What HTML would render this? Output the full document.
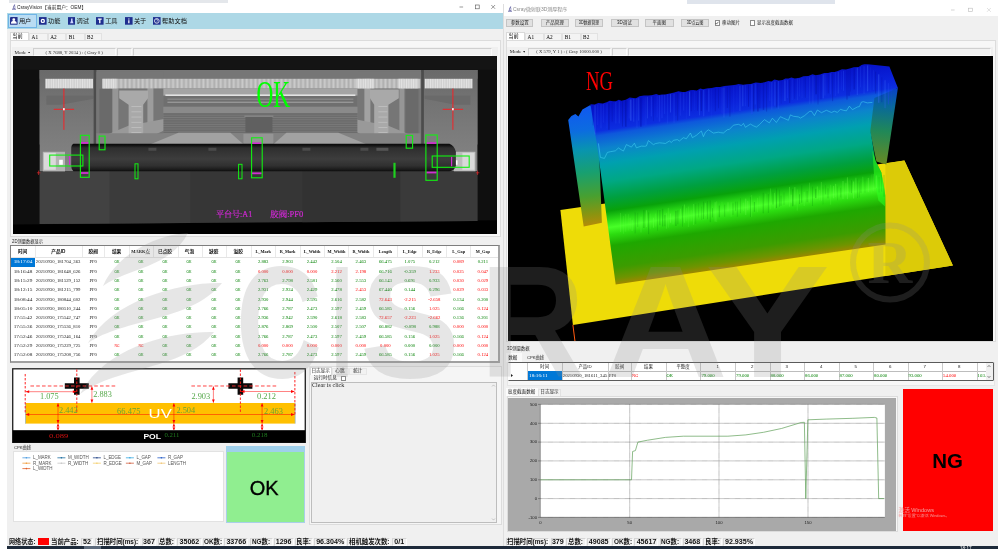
<!DOCTYPE html>
<html lang="zh-CN"><head><meta charset="utf-8"><title>CsrayVision</title>
<style>
html,body{margin:0;padding:0}
body{width:1000px;height:552px;position:relative;overflow:hidden;background:#fff;font-family:"Liberation Sans","Noto Sans CJK SC",sans-serif;}
div,span,svg{position:absolute;box-sizing:border-box}
span{white-space:nowrap}
.f{font-family:"Liberation Sans","Noto Sans CJK SC",sans-serif}
.r{font-family:"Liberation Serif","Noto Serif CJK SC",serif}
svg text{white-space:pre}
</style></head><body><div id="root" style="left:0;top:0;width:1000px;height:552px;overflow:hidden;will-change:transform">

<div style="left:9px;top:0px;width:219px;height:3.4px;background:#e4e7eb;"></div>
<div style="left:687px;top:0px;width:148px;height:3.6px;background:#dfe4ec;"></div>
<div style="left:7px;top:3px;width:496px;height:544px;background:#f0f0f0;"></div>
<div style="left:7px;top:3px;width:496px;height:10.4px;background:#ffffff;"></div>
<svg style="left:10.5px;top:4.2px" width="6" height="6" viewBox="0 0 12 12"><path d="M2 10.5h8M3.5 8.5h5M6.2 8.5c-2-2.5-1.5-5 1.3-7-1 2.500 .2 3.500 1 5" fill="none" stroke="#3b3b8c" stroke-width="1.3"/></svg>
<span class="f" style="top:4.14px;font-size:5.1px;line-height:6.12px;color:#222;left:17.3px;transform-origin:0 50%;transform:scaleX(0.93);">CsrayVision【当前用户：OEM】</span>
<svg style="left:456.500px;top:3.400px" width="46" height="8" viewBox="0 0 46 8"><path d="M2.500 4h3.600" stroke="#555" stroke-width=".6"/><rect x="18.400" y="2" width="3.800" height="3.800" fill="none" stroke="#555" stroke-width=".6"/><path d="M34.300 2l3.800 3.800M38.100 2l-3.800 3.800" stroke="#555" stroke-width=".6"/></svg>
<div style="left:7px;top:13.2px;width:496px;height:15.6px;background:#add8e6;"></div>
<div style="left:8px;top:13.6px;width:29.3px;height:14.8px;background:#b9dcf3;border:0.6px solid #6fb4e6;"></div>
<svg style="left:10px;top:17px" width="7.600" height="7.800" viewBox="0 0 8 8"><rect width="8" height="8" rx=".5" fill="#24308c"/><circle cx="4" cy="2.700" r="1.500" fill="#fff"/><path d="M1 6.400c0-1.700 1.300-2.200 3-2.200s3 .5 3 2.200z" fill="#fff"/><rect x="1" y="6.600" width="6" height=".7" fill="#dfe4f5"/></svg>
<span class="f" style="top:17.38px;font-size:6.2px;line-height:7.44px;color:#111;left:18.9px;">用户</span>
<svg style="left:39.1px;top:17px" width="7.600" height="7.800" viewBox="0 0 8 8"><rect width="8" height="8" fill="#1f2f8f"/><circle cx="4" cy="4" r="2.300" fill="#fff"/><circle cx="4" cy="4" r=".9" fill="#1f2f8f"/></svg>
<span class="f" style="top:17.38px;font-size:6.2px;line-height:7.44px;color:#111;left:48.0px;">功能</span>
<svg style="left:67.7px;top:17px" width="7.600" height="7.800" viewBox="0 0 8 8"><rect width="8" height="8" fill="#1f2f8f"/><path d="M3.200 1.500h1.600v2.300l1 2.700H2.200l1-2.700z" fill="#cfd6ff"/></svg>
<span class="f" style="top:17.38px;font-size:6.2px;line-height:7.44px;color:#111;left:76.60000000000001px;">调试</span>
<svg style="left:96.3px;top:17px" width="7.600" height="7.800" viewBox="0 0 8 8"><rect width="8" height="8" fill="#1f2f8f"/><path d="M2 1.500h4v1.200H4.700V6.500H3.300V2.700H2z" fill="#fff"/></svg>
<span class="f" style="top:17.38px;font-size:6.2px;line-height:7.44px;color:#111;left:105.2px;">工具</span>
<svg style="left:125px;top:17px" width="7.600" height="7.800" viewBox="0 0 8 8"><rect width="8" height="8" fill="#1f2f8f"/><path d="M3.400 3.200h1.300v3.300H3.400zM3.400 1.400h1.300v1.100H3.400z" fill="#fff"/></svg>
<span class="f" style="top:17.38px;font-size:6.2px;line-height:7.44px;color:#111;left:133.9px;">关于</span>
<svg style="left:153.2px;top:17px" width="7.600" height="7.800" viewBox="0 0 8 8"><rect width="8" height="8" fill="#1f2f8f"/><circle cx="4" cy="4" r="2.500" fill="none" stroke="#fff" stroke-width=".8"/><path d="M3.200 3.300c0-1.200 1.800-1.200 1.800 0 0 .7-.9.700-.9 1.500M4.100 5.500v.5" stroke="#fff" stroke-width=".6" fill="none"/></svg>
<span class="f" style="top:17.38px;font-size:6.2px;line-height:7.44px;color:#111;left:162.1px;">帮助文档</span>
<div style="left:10px;top:31.7px;width:19.2px;height:8.4px;background:#ffffff;border:0.4px solid #d9d9d9;border-bottom:none;"></div>
<span class="f" style="top:32.68px;font-size:5.2px;line-height:6.24px;left:12.2px;">当前</span>
<div style="left:29.2px;top:32.9px;width:18.7px;height:7.2px;background:#f3f3f3;border:0.4px solid #e2e2e2;border-bottom:none;"></div>
<span class="r" style="top:33.72px;font-size:5.3px;line-height:6.36px;left:31.599999999999998px;">A1</span>
<div style="left:47.9px;top:32.9px;width:18.4px;height:7.2px;background:#f3f3f3;border:0.4px solid #e2e2e2;border-bottom:none;"></div>
<span class="r" style="top:33.72px;font-size:5.3px;line-height:6.36px;left:50.3px;">A2</span>
<div style="left:66.3px;top:32.9px;width:18.4px;height:7.2px;background:#f3f3f3;border:0.4px solid #e2e2e2;border-bottom:none;"></div>
<span class="r" style="top:33.72px;font-size:5.3px;line-height:6.36px;left:68.7px;">B1</span>
<div style="left:84.7px;top:32.9px;width:17.2px;height:7.2px;background:#f3f3f3;border:0.4px solid #e2e2e2;border-bottom:none;"></div>
<span class="r" style="top:33.72px;font-size:5.3px;line-height:6.36px;left:87.10000000000001px;">B2</span>
<div style="left:9.6px;top:39.8px;width:491.5px;height:197px;background:#f7f7f7;border:0.5px solid #dcdcdc;"></div>
<div style="left:12.2px;top:47.3px;width:486px;height:9px;background:#f0f0f0;"></div>
<span class="r" style="top:49.80px;font-size:5px;line-height:6.00px;color:#222;left:14.600000000000001px;">Mode</span>
<svg style="left:27.8px;top:51.5px" width="2.4" height="1.8" viewBox="0 0 4 3"><path d="M0 0h4l-2 3z" fill="#333"/></svg>
<div style="left:32.6px;top:48.400000000000006px;width:83.19999999999999px;height:7.8px;background:#f1f1f1;border:1px solid #d0d0d0;border-right-color:#fbfbfb;border-bottom-color:#fbfbfb;"></div>
<span class="r" style="top:49.88px;font-size:4.7px;line-height:5.64px;color:#333;left:74.2px;transform:translateX(-50%);">( X 7688, Y 2034 ) : ( Gray 0 )</span>
<div style="left:117.0px;top:48.400000000000006px;width:14.600000000000014px;height:7.8px;background:#f1f1f1;border:1px solid #d0d0d0;border-right-color:#fbfbfb;border-bottom-color:#fbfbfb;"></div>
<div style="left:132.8px;top:48.400000000000006px;width:359.2px;height:7.8px;background:#f1f1f1;border:1px solid #d0d0d0;border-right-color:#fbfbfb;border-bottom-color:#fbfbfb;"></div>
<div style="left:12.6px;top:56.2px;width:484px;height:177.8px;background:#000;"></div>
<svg style="left:12.6px;top:56.2px" width="484" height="177.8" viewBox="12.6 56.2 484 177.8"><defs>
<linearGradient id="cyl" x1="0" y1="0" x2="0" y2="1"><stop offset="0" stop-color="#080808"/><stop offset=".07" stop-color="#161616"/><stop offset=".15" stop-color="#2e2e2e"/><stop offset=".55" stop-color="#3d3d3d"/><stop offset=".8" stop-color="#303030"/><stop offset=".93" stop-color="#1c1c1c"/><stop offset="1" stop-color="#0c0c0c"/></linearGradient>
<linearGradient id="pan" x1="0" y1="0" x2="0" y2="1"><stop offset="0" stop-color="#6a6a6a"/><stop offset=".35" stop-color="#747474"/><stop offset="1" stop-color="#858585"/></linearGradient>
<pattern id="st" width="2.400" height="10" patternUnits="userSpaceOnUse"><rect width="2.400" height="10" fill="#cfcfcf"/><rect width="1" height="10" fill="#e4e4e4"/></pattern>
<pattern id="st2" width="1.300" height="10" patternUnits="userSpaceOnUse"><rect width="1.300" height="10" fill="#aeaeae"/><rect width=".6" height="10" fill="#cecece"/></pattern>
<pattern id="hl" width="10" height="2.300" patternUnits="userSpaceOnUse"><rect width="10" height="2.300" fill="#6c6c6c"/><rect width="10" height=".7" fill="#7b7b7b"/></pattern>
</defs><path d="M12.600 56.200H496.600V220.400L12.600 224.600z" fill="#0f0f0f"/><path d="M12.600 56.200H496.600V70H12.600z" fill="#141414"/><path d="M39.300 171H477V221.200L39.300 224.300z" fill="#363636"/><path d="M39.300 171H109.500V223.800L39.300 224.300z" fill="#424242"/><path d="M109.500 171H190V223.200L109.500 223.800z" fill="#3b3b3b"/><path d="M302 171H400V221.700L302 222.400z" fill="#323232"/><path d="M400 171H477V221.200L400 221.700z" fill="#3a3a3a"/><rect x="39.300" y="70.200" width="437.700" height="74.500" fill="#818181"/><rect x="39.300" y="70.200" width="437.700" height="8.800" fill="#767676"/><rect x="39.300" y="70.200" width="54" height="101" fill="url(#pan)"/><rect x="423.500" y="70.200" width="53.500" height="101" fill="url(#pan)"/><path d="M46 96H93V99L60 105H46z" fill="#6a6a6a"/><path d="M424 96H470V105H455L424 99z" fill="#6a6a6a"/><rect x="44.900" y="79" width="47.800" height="9.600" fill="url(#st)"/><rect x="424.300" y="79" width="47.800" height="9.600" fill="url(#st)"/><rect x="93.200" y="70.200" width="2.800" height="74" fill="#4c4c4c"/><rect x="420.700" y="70.200" width="2.800" height="74" fill="#4c4c4c"/><rect x="96" y="72" width="67" height="72" fill="#767676"/><rect x="357" y="72" width="63.700" height="72" fill="#767676"/><rect x="99" y="89" width="13" height="46" fill="#6a6a6a"/><rect x="405" y="89" width="13" height="46" fill="#6a6a6a"/><rect x="112" y="79" width="6" height="65" fill="#969696"/><rect x="147" y="79" width="6" height="65" fill="#9c9c9c"/><rect x="364" y="79" width="6" height="65" fill="#a2a2a2"/><rect x="399" y="79" width="5" height="65" fill="#969696"/><rect x="102" y="79" width="318" height="9.600" fill="url(#st2)"/><rect x="102" y="79" width="14" height="9.600" fill="url(#st)"/><rect x="356" y="79" width="18" height="9.600" fill="url(#st)"/><rect x="398" y="79" width="20" height="9.600" fill="url(#st)"/><path d="M97 144.500V139L128 126L170 118L172 127L150 137L143 144.500z" fill="#999"/><path d="M419 144.500V139L388 126L347 118L345 127L366 137L373 144.500z" fill="#999"/><path d="M118.800 90.600H147.600V98.500L142.800 105V144H128.200V105L118.800 98.500z" fill="#a9a9a9"/><path d="M369.600 89.800H398.400V98.500L388 105V144H373.800V105L369.600 98.500z" fill="#a9a9a9"/><rect x="131" y="106.5" width="10" height=".7" fill="#c4c4c4"/><rect x="378" y="106.5" width="9" height=".7" fill="#c4c4c4"/><rect x="131" y="111.7" width="10" height=".7" fill="#c4c4c4"/><rect x="378" y="111.7" width="9" height=".7" fill="#c4c4c4"/><rect x="131" y="116.9" width="10" height=".7" fill="#c4c4c4"/><rect x="378" y="116.9" width="9" height=".7" fill="#c4c4c4"/><rect x="131" y="122.1" width="10" height=".7" fill="#c4c4c4"/><rect x="378" y="122.1" width="9" height=".7" fill="#c4c4c4"/><rect x="131" y="127.3" width="10" height=".7" fill="#c4c4c4"/><rect x="378" y="127.3" width="9" height=".7" fill="#c4c4c4"/><rect x="131" y="132.5" width="10" height=".7" fill="#c4c4c4"/><rect x="378" y="132.5" width="9" height=".7" fill="#c4c4c4"/><rect x="131" y="137.7" width="10" height=".7" fill="#c4c4c4"/><rect x="378" y="137.7" width="9" height=".7" fill="#c4c4c4"/><rect x="163" y="88.600" width="194" height="7" fill="#a4a4a4"/><rect x="165" y="94.600" width="190" height="1.600" fill="#e2e2e2"/><rect x="163" y="96.200" width="194" height="10.800" fill="#6f6f6f"/><rect x="167" y="99" width="186" height=".6" fill="#a8a8a8"/><rect x="167" y="102" width="186" height=".7" fill="#bdbdbd" /><rect x="163" y="107" width="194" height="6.200" fill="#8a8a8a"/><rect x="163" y="113.200" width="194" height="20" fill="url(#hl)"/><rect x="245" y="116.500" width="27" height="16" fill="#606060"/><rect x="244" y="115.800" width="29" height="1.200" fill="#8c8c8c"/><path d="M96 133.500H420V144.500H96z" fill="#828282"/><path d="M150 144.500L178 133H230L243 144.500z" fill="#a2a2a2"/><path d="M273 144.500L286 133H338L366 144.500z" fill="#a2a2a2"/><path d="M243 144.500V134H273V144.500z" fill="#959595"/><rect x="42.400" y="152" width="22.200" height="19.600" fill="#b4b4b4"/><rect x="43.400" y="153" width="12" height="17" fill="#dadada"/><rect x="58.800" y="160" width="3.600" height="5" fill="#fff"/><rect x="453.500" y="152" width="21.500" height="19.500" fill="#bdbdbd"/><rect x="462" y="153" width="12" height="17" fill="#d9d9d9"/><rect x="453.500" y="160.500" width="3.600" height="4.500" fill="#fff"/><path d="M73 144H449Q454 146 455.500 152V166Q454 171 449 171.500H73Q70.800 170 70.800 166V149Q70.800 145 73 144z" fill="url(#cyl)"/><rect x="148" y="148" width="8" height="3" fill="#4a4a4a"/><rect x="208" y="148" width="8" height="3" fill="#4a4a4a"/><rect x="302" y="148" width="8" height="3" fill="#4a4a4a"/><rect x="360" y="148" width="8" height="3" fill="#4a4a4a"/><rect x="376" y="148" width="12" height="3" fill="#555"/><path d="M53.3 109.500H73.7M63.5 88.800V130" stroke="#f42226" stroke-width="1" fill="none"/><rect x="62.7" y="108.300" width="1.600" height="2.200" fill="#fff"/><path d="M442.3 109.500H462.7M452.5 88.800V130" stroke="#f42226" stroke-width="1" fill="none"/><rect x="451.7" y="108.300" width="1.600" height="2.200" fill="#fff"/><path d="M36.500 173H40M38.200 170.800V175.200M475.500 173H479M477.200 170.800V175.200" stroke="#e0262a" stroke-width=".7" fill="none"/><rect x="80.600" y="142.200" width="7.600" height="1.800" fill="#d030d0"/><rect x="80.600" y="172.300" width="7.600" height="1.800" fill="#d030d0"/><rect x="251.600" y="142.600" width="9.600" height="1.600" fill="#d030d0"/><rect x="251.600" y="172.600" width="9.600" height="1.800" fill="#d030d0"/><rect x="426" y="142.400" width="10.200" height="1.700" fill="#d030d0"/><rect x="426" y="171.800" width="10.200" height="1.800" fill="#d030d0"/><rect x="68.600" y="156" width="1.200" height="9.500" fill="#d030d0"/><rect x="450.600" y="157" width="1.200" height="9.500" fill="#d030d0"/><rect x="80" y="135.5" width="8.80" height="42.00" fill="none" stroke="#12f012" stroke-width="1.1"/><rect x="98.8" y="136.3" width="5.80" height="13.70" fill="none" stroke="#12f012" stroke-width="1.1"/><rect x="49.3" y="155.3" width="33.20" height="10.90" fill="none" stroke="#12f012" stroke-width="1.1"/><rect x="134.6" y="164" width="3.00" height="15.00" fill="none" stroke="#12f012" stroke-width="1.0"/><rect x="238.2" y="164.5" width="3.40" height="14.50" fill="none" stroke="#12f012" stroke-width="1.0"/><rect x="251.2" y="138" width="10.60" height="40.00" fill="none" stroke="#12f012" stroke-width="1.1"/><rect x="393" y="163" width="2.200" height="15" fill="#1fd01f"/><rect x="405.8" y="135.6" width="6.40" height="12.80" fill="none" stroke="#12f012" stroke-width="1.1"/><rect x="425.5" y="135.2" width="11.30" height="45.30" fill="none" stroke="#12f012" stroke-width="1.1"/><rect x="431.8" y="156.2" width="37.00" height="11.30" fill="none" stroke="#12f012" stroke-width="1.1"/><text x="256" y="107.400" font-family="Liberation Serif,Noto Serif CJK SC,serif" font-size="38.600" fill="#00ff00" textLength="33.600" lengthAdjust="spacingAndGlyphs">OK</text><text x="215.500" y="217" font-family="Liberation Serif,Noto Serif CJK SC,serif" font-size="8.100" fill="#c828cc" stroke="#c828cc" stroke-width=".25" textLength="36.300" lengthAdjust="spacingAndGlyphs">平台号:A1</text><text x="269.900" y="217" font-family="Liberation Serif,Noto Serif CJK SC,serif" font-size="8.100" fill="#c828cc" stroke="#c828cc" stroke-width=".25" textLength="33" lengthAdjust="spacingAndGlyphs">胶阀:PF0</text></svg>
<span class="f" style="top:238.84px;font-size:4.6px;line-height:5.52px;color:#222;left:12px;transform-origin:0 50%;transform:scaleX(0.93);">2D测量数据显示</span>
<div style="left:10.4px;top:245px;width:489.4px;height:118.4px;background:#ffffff;border:1px solid #7e7e7e;border-right:2px solid #a4a4a4;border-bottom:2px solid #a0a0a0;"></div>
<div style="left:11.2px;top:256.9px;width:487px;height:0.4px;background:#e4e4e4;"></div>
<div style="left:34.9px;top:246px;width:0.4px;height:10.9px;background:#e9e9e9;"></div>
<div style="left:82.2px;top:246px;width:0.4px;height:10.9px;background:#e9e9e9;"></div>
<div style="left:104.4px;top:246px;width:0.4px;height:10.9px;background:#e9e9e9;"></div>
<div style="left:128.8px;top:246px;width:0.4px;height:10.9px;background:#e9e9e9;"></div>
<div style="left:153.2px;top:246px;width:0.4px;height:10.9px;background:#e9e9e9;"></div>
<div style="left:177.6px;top:246px;width:0.4px;height:10.9px;background:#e9e9e9;"></div>
<div style="left:202px;top:246px;width:0.4px;height:10.9px;background:#e9e9e9;"></div>
<div style="left:226.4px;top:246px;width:0.4px;height:10.9px;background:#e9e9e9;"></div>
<div style="left:250.8px;top:246px;width:0.4px;height:10.9px;background:#e9e9e9;"></div>
<div style="left:275.2px;top:246px;width:0.4px;height:10.9px;background:#e9e9e9;"></div>
<div style="left:299.6px;top:246px;width:0.4px;height:10.9px;background:#e9e9e9;"></div>
<div style="left:324px;top:246px;width:0.4px;height:10.9px;background:#e9e9e9;"></div>
<div style="left:348.4px;top:246px;width:0.4px;height:10.9px;background:#e9e9e9;"></div>
<div style="left:372.8px;top:246px;width:0.4px;height:10.9px;background:#e9e9e9;"></div>
<div style="left:397.2px;top:246px;width:0.4px;height:10.9px;background:#e9e9e9;"></div>
<div style="left:421.6px;top:246px;width:0.4px;height:10.9px;background:#e9e9e9;"></div>
<div style="left:446px;top:246px;width:0.4px;height:10.9px;background:#e9e9e9;"></div>
<div style="left:470.4px;top:246px;width:0.4px;height:10.9px;background:#e9e9e9;"></div>
<span class="f" style="top:248.78px;font-size:4.7px;line-height:5.64px;color:#111;font-weight:bold;left:22.6px;transform:translateX(-50%);">时间</span>
<span class="f" style="top:248.78px;font-size:4.7px;line-height:5.64px;color:#111;font-weight:bold;left:58.3px;transform:translateX(-50%);">产品ID</span>
<span class="f" style="top:248.78px;font-size:4.7px;line-height:5.64px;color:#111;font-weight:bold;left:93.2px;transform:translateX(-50%);">胶阀</span>
<span class="f" style="top:248.78px;font-size:4.7px;line-height:5.64px;color:#111;font-weight:bold;left:116.6px;transform:translateX(-50%);">结果</span>
<span class="r" style="top:248.90px;font-size:4.5px;line-height:5.40px;color:#111;font-weight:bold;left:140.6px;transform:translateX(-50%);">MARK点</span>
<span class="f" style="top:248.78px;font-size:4.7px;line-height:5.64px;color:#111;font-weight:bold;left:165px;transform:translateX(-50%);">已点胶</span>
<span class="f" style="top:248.78px;font-size:4.7px;line-height:5.64px;color:#111;font-weight:bold;left:189.4px;transform:translateX(-50%);">气泡</span>
<span class="f" style="top:248.78px;font-size:4.7px;line-height:5.64px;color:#111;font-weight:bold;left:213.8px;transform:translateX(-50%);">缺胶</span>
<span class="f" style="top:248.78px;font-size:4.7px;line-height:5.64px;color:#111;font-weight:bold;left:238.3px;transform:translateX(-50%);">溢胶</span>
<span class="r" style="top:249.02px;font-size:4.3px;line-height:5.16px;color:#111;font-weight:bold;left:263.2px;transform:translateX(-50%);">L_Mark</span>
<span class="r" style="top:249.02px;font-size:4.3px;line-height:5.16px;color:#111;font-weight:bold;left:287.6px;transform:translateX(-50%);">R_Mark</span>
<span class="r" style="top:249.02px;font-size:4.3px;line-height:5.16px;color:#111;font-weight:bold;left:312px;transform:translateX(-50%);">L_Width</span>
<span class="r" style="top:249.02px;font-size:4.3px;line-height:5.16px;color:#111;font-weight:bold;left:336.5px;transform:translateX(-50%);">M_Width</span>
<span class="r" style="top:249.02px;font-size:4.3px;line-height:5.16px;color:#111;font-weight:bold;left:360.9px;transform:translateX(-50%);">R_Width</span>
<span class="r" style="top:249.02px;font-size:4.3px;line-height:5.16px;color:#111;font-weight:bold;left:385.4px;transform:translateX(-50%);">Length</span>
<span class="r" style="top:249.02px;font-size:4.3px;line-height:5.16px;color:#111;font-weight:bold;left:409.8px;transform:translateX(-50%);">L_Edge</span>
<span class="r" style="top:249.02px;font-size:4.3px;line-height:5.16px;color:#111;font-weight:bold;left:434.3px;transform:translateX(-50%);">R_Edge</span>
<span class="r" style="top:249.02px;font-size:4.3px;line-height:5.16px;color:#111;font-weight:bold;left:458.6px;transform:translateX(-50%);">L_Gap</span>
<span class="r" style="top:249.02px;font-size:4.3px;line-height:5.16px;color:#111;font-weight:bold;left:482.9px;transform:translateX(-50%);">M_Gap</span>
<div style="left:11.2px;top:257.6px;width:23.6px;height:9.1px;background:#0078d7;"></div>
<span class="r" style="top:259.48px;font-size:4.7px;line-height:5.64px;color:#fff;left:22.6px;transform:translateX(-50%) scaleX(1.12);">18:17:04</span>
<span class="r" style="top:259.48px;font-size:4.7px;line-height:5.64px;color:#222;left:35.8px;">20210930_181704_363</span>
<span class="r" style="top:259.48px;font-size:4.7px;line-height:5.64px;color:#222;left:93.2px;transform:translateX(-50%);">PF0</span>
<span class="r" style="top:259.48px;font-size:4.7px;line-height:5.64px;color:#008000;left:116.6px;transform:translateX(-50%) scaleX(0.74);">OK</span>
<span class="r" style="top:259.48px;font-size:4.7px;line-height:5.64px;color:#008000;left:140.6px;transform:translateX(-50%) scaleX(0.74);">OK</span>
<span class="r" style="top:259.48px;font-size:4.7px;line-height:5.64px;color:#008000;left:165px;transform:translateX(-50%) scaleX(0.74);">OK</span>
<span class="r" style="top:259.48px;font-size:4.7px;line-height:5.64px;color:#008000;left:189.4px;transform:translateX(-50%) scaleX(0.74);">OK</span>
<span class="r" style="top:259.48px;font-size:4.7px;line-height:5.64px;color:#008000;left:213.8px;transform:translateX(-50%) scaleX(0.74);">OK</span>
<span class="r" style="top:259.48px;font-size:4.7px;line-height:5.64px;color:#008000;left:238.3px;transform:translateX(-50%) scaleX(0.74);">OK</span>
<span class="r" style="top:259.48px;font-size:4.7px;line-height:5.64px;color:#008000;left:263.2px;transform:translateX(-50%);">2.883</span>
<span class="r" style="top:259.48px;font-size:4.7px;line-height:5.64px;color:#008000;left:287.6px;transform:translateX(-50%);">2.903</span>
<span class="r" style="top:259.48px;font-size:4.7px;line-height:5.64px;color:#008000;left:312px;transform:translateX(-50%);">2.442</span>
<span class="r" style="top:259.48px;font-size:4.7px;line-height:5.64px;color:#008000;left:336.5px;transform:translateX(-50%);">2.504</span>
<span class="r" style="top:259.48px;font-size:4.7px;line-height:5.64px;color:#008000;left:360.9px;transform:translateX(-50%);">2.463</span>
<span class="r" style="top:259.48px;font-size:4.7px;line-height:5.64px;color:#008000;left:385.4px;transform:translateX(-50%);">66.475</span>
<span class="r" style="top:259.48px;font-size:4.7px;line-height:5.64px;color:#008000;left:409.8px;transform:translateX(-50%);">1.075</span>
<span class="r" style="top:259.48px;font-size:4.7px;line-height:5.64px;color:#008000;left:434.3px;transform:translateX(-50%);">0.212</span>
<span class="r" style="top:259.48px;font-size:4.7px;line-height:5.64px;color:#ff0000;left:458.6px;transform:translateX(-50%);">0.089</span>
<span class="r" style="top:259.48px;font-size:4.7px;line-height:5.64px;color:#008000;left:482.9px;transform:translateX(-50%);">0.211</span>
<span class="r" style="top:268.75px;font-size:4.7px;line-height:5.64px;color:#222;left:22.6px;transform:translateX(-50%) scaleX(1.12);">18:16:48</span>
<span class="r" style="top:268.75px;font-size:4.7px;line-height:5.64px;color:#222;left:35.8px;">20210930_181648_626</span>
<span class="r" style="top:268.75px;font-size:4.7px;line-height:5.64px;color:#222;left:93.2px;transform:translateX(-50%);">PF0</span>
<span class="r" style="top:268.75px;font-size:4.7px;line-height:5.64px;color:#008000;left:116.6px;transform:translateX(-50%) scaleX(0.74);">OK</span>
<span class="r" style="top:268.75px;font-size:4.7px;line-height:5.64px;color:#008000;left:140.6px;transform:translateX(-50%) scaleX(0.74);">OK</span>
<span class="r" style="top:268.75px;font-size:4.7px;line-height:5.64px;color:#008000;left:165px;transform:translateX(-50%) scaleX(0.74);">OK</span>
<span class="r" style="top:268.75px;font-size:4.7px;line-height:5.64px;color:#008000;left:189.4px;transform:translateX(-50%) scaleX(0.74);">OK</span>
<span class="r" style="top:268.75px;font-size:4.7px;line-height:5.64px;color:#008000;left:213.8px;transform:translateX(-50%) scaleX(0.74);">OK</span>
<span class="r" style="top:268.75px;font-size:4.7px;line-height:5.64px;color:#008000;left:238.3px;transform:translateX(-50%) scaleX(0.74);">OK</span>
<span class="r" style="top:268.75px;font-size:4.7px;line-height:5.64px;color:#ff0000;left:263.2px;transform:translateX(-50%);">0.000</span>
<span class="r" style="top:268.75px;font-size:4.7px;line-height:5.64px;color:#ff0000;left:287.6px;transform:translateX(-50%);">0.000</span>
<span class="r" style="top:268.75px;font-size:4.7px;line-height:5.64px;color:#ff0000;left:312px;transform:translateX(-50%);">0.000</span>
<span class="r" style="top:268.75px;font-size:4.7px;line-height:5.64px;color:#ff0000;left:336.5px;transform:translateX(-50%);">2.212</span>
<span class="r" style="top:268.75px;font-size:4.7px;line-height:5.64px;color:#ff0000;left:360.9px;transform:translateX(-50%);">2.198</span>
<span class="r" style="top:268.75px;font-size:4.7px;line-height:5.64px;color:#008000;left:385.4px;transform:translateX(-50%);">66.716</span>
<span class="r" style="top:268.75px;font-size:4.7px;line-height:5.64px;color:#008000;left:409.8px;transform:translateX(-50%);">-0.359</span>
<span class="r" style="top:268.75px;font-size:4.7px;line-height:5.64px;color:#ff0000;left:434.3px;transform:translateX(-50%);">1.233</span>
<span class="r" style="top:268.75px;font-size:4.7px;line-height:5.64px;color:#ff0000;left:458.6px;transform:translateX(-50%);">0.025</span>
<span class="r" style="top:268.75px;font-size:4.7px;line-height:5.64px;color:#ff0000;left:482.9px;transform:translateX(-50%);">0.047</span>
<span class="r" style="top:278.02px;font-size:4.7px;line-height:5.64px;color:#222;left:22.6px;transform:translateX(-50%) scaleX(1.12);">18:15:29</span>
<span class="r" style="top:278.02px;font-size:4.7px;line-height:5.64px;color:#222;left:35.8px;">20210930_181529_152</span>
<span class="r" style="top:278.02px;font-size:4.7px;line-height:5.64px;color:#222;left:93.2px;transform:translateX(-50%);">PF0</span>
<span class="r" style="top:278.02px;font-size:4.7px;line-height:5.64px;color:#008000;left:116.6px;transform:translateX(-50%) scaleX(0.74);">OK</span>
<span class="r" style="top:278.02px;font-size:4.7px;line-height:5.64px;color:#008000;left:140.6px;transform:translateX(-50%) scaleX(0.74);">OK</span>
<span class="r" style="top:278.02px;font-size:4.7px;line-height:5.64px;color:#008000;left:165px;transform:translateX(-50%) scaleX(0.74);">OK</span>
<span class="r" style="top:278.02px;font-size:4.7px;line-height:5.64px;color:#008000;left:189.4px;transform:translateX(-50%) scaleX(0.74);">OK</span>
<span class="r" style="top:278.02px;font-size:4.7px;line-height:5.64px;color:#008000;left:213.8px;transform:translateX(-50%) scaleX(0.74);">OK</span>
<span class="r" style="top:278.02px;font-size:4.7px;line-height:5.64px;color:#008000;left:238.3px;transform:translateX(-50%) scaleX(0.74);">OK</span>
<span class="r" style="top:278.02px;font-size:4.7px;line-height:5.64px;color:#008000;left:263.2px;transform:translateX(-50%);">2.763</span>
<span class="r" style="top:278.02px;font-size:4.7px;line-height:5.64px;color:#008000;left:287.6px;transform:translateX(-50%);">2.798</span>
<span class="r" style="top:278.02px;font-size:4.7px;line-height:5.64px;color:#008000;left:312px;transform:translateX(-50%);">2.581</span>
<span class="r" style="top:278.02px;font-size:4.7px;line-height:5.64px;color:#008000;left:336.5px;transform:translateX(-50%);">2.560</span>
<span class="r" style="top:278.02px;font-size:4.7px;line-height:5.64px;color:#008000;left:360.9px;transform:translateX(-50%);">2.553</span>
<span class="r" style="top:278.02px;font-size:4.7px;line-height:5.64px;color:#008000;left:385.4px;transform:translateX(-50%);">66.143</span>
<span class="r" style="top:278.02px;font-size:4.7px;line-height:5.64px;color:#008000;left:409.8px;transform:translateX(-50%);">0.691</span>
<span class="r" style="top:278.02px;font-size:4.7px;line-height:5.64px;color:#008000;left:434.3px;transform:translateX(-50%);">0.933</span>
<span class="r" style="top:278.02px;font-size:4.7px;line-height:5.64px;color:#ff0000;left:458.6px;transform:translateX(-50%);">0.030</span>
<span class="r" style="top:278.02px;font-size:4.7px;line-height:5.64px;color:#ff0000;left:482.9px;transform:translateX(-50%);">0.029</span>
<span class="r" style="top:287.29px;font-size:4.7px;line-height:5.64px;color:#222;left:22.6px;transform:translateX(-50%) scaleX(1.12);">18:12:15</span>
<span class="r" style="top:287.29px;font-size:4.7px;line-height:5.64px;color:#222;left:35.8px;">20210930_181215_799</span>
<span class="r" style="top:287.29px;font-size:4.7px;line-height:5.64px;color:#222;left:93.2px;transform:translateX(-50%);">PF0</span>
<span class="r" style="top:287.29px;font-size:4.7px;line-height:5.64px;color:#008000;left:116.6px;transform:translateX(-50%) scaleX(0.74);">OK</span>
<span class="r" style="top:287.29px;font-size:4.7px;line-height:5.64px;color:#008000;left:140.6px;transform:translateX(-50%) scaleX(0.74);">OK</span>
<span class="r" style="top:287.29px;font-size:4.7px;line-height:5.64px;color:#008000;left:165px;transform:translateX(-50%) scaleX(0.74);">OK</span>
<span class="r" style="top:287.29px;font-size:4.7px;line-height:5.64px;color:#008000;left:189.4px;transform:translateX(-50%) scaleX(0.74);">OK</span>
<span class="r" style="top:287.29px;font-size:4.7px;line-height:5.64px;color:#008000;left:213.8px;transform:translateX(-50%) scaleX(0.74);">OK</span>
<span class="r" style="top:287.29px;font-size:4.7px;line-height:5.64px;color:#008000;left:238.3px;transform:translateX(-50%) scaleX(0.74);">OK</span>
<span class="r" style="top:287.29px;font-size:4.7px;line-height:5.64px;color:#008000;left:263.2px;transform:translateX(-50%);">2.931</span>
<span class="r" style="top:287.29px;font-size:4.7px;line-height:5.64px;color:#008000;left:287.6px;transform:translateX(-50%);">2.924</span>
<span class="r" style="top:287.29px;font-size:4.7px;line-height:5.64px;color:#008000;left:312px;transform:translateX(-50%);">2.429</span>
<span class="r" style="top:287.29px;font-size:4.7px;line-height:5.64px;color:#008000;left:336.5px;transform:translateX(-50%);">2.478</span>
<span class="r" style="top:287.29px;font-size:4.7px;line-height:5.64px;color:#ff0000;left:360.9px;transform:translateX(-50%);">2.453</span>
<span class="r" style="top:287.29px;font-size:4.7px;line-height:5.64px;color:#008000;left:385.4px;transform:translateX(-50%);">67.440</span>
<span class="r" style="top:287.29px;font-size:4.7px;line-height:5.64px;color:#008000;left:409.8px;transform:translateX(-50%);">0.144</span>
<span class="r" style="top:287.29px;font-size:4.7px;line-height:5.64px;color:#008000;left:434.3px;transform:translateX(-50%);">0.296</span>
<span class="r" style="top:287.29px;font-size:4.7px;line-height:5.64px;color:#ff0000;left:458.6px;transform:translateX(-50%);">0.029</span>
<span class="r" style="top:287.29px;font-size:4.7px;line-height:5.64px;color:#ff0000;left:482.9px;transform:translateX(-50%);">0.033</span>
<span class="r" style="top:296.56px;font-size:4.7px;line-height:5.64px;color:#222;left:22.6px;transform:translateX(-50%) scaleX(1.12);">18:08:44</span>
<span class="r" style="top:296.56px;font-size:4.7px;line-height:5.64px;color:#222;left:35.8px;">20210930_180844_602</span>
<span class="r" style="top:296.56px;font-size:4.7px;line-height:5.64px;color:#222;left:93.2px;transform:translateX(-50%);">PF0</span>
<span class="r" style="top:296.56px;font-size:4.7px;line-height:5.64px;color:#008000;left:116.6px;transform:translateX(-50%) scaleX(0.74);">OK</span>
<span class="r" style="top:296.56px;font-size:4.7px;line-height:5.64px;color:#008000;left:140.6px;transform:translateX(-50%) scaleX(0.74);">OK</span>
<span class="r" style="top:296.56px;font-size:4.7px;line-height:5.64px;color:#008000;left:165px;transform:translateX(-50%) scaleX(0.74);">OK</span>
<span class="r" style="top:296.56px;font-size:4.7px;line-height:5.64px;color:#008000;left:189.4px;transform:translateX(-50%) scaleX(0.74);">OK</span>
<span class="r" style="top:296.56px;font-size:4.7px;line-height:5.64px;color:#008000;left:213.8px;transform:translateX(-50%) scaleX(0.74);">OK</span>
<span class="r" style="top:296.56px;font-size:4.7px;line-height:5.64px;color:#008000;left:238.3px;transform:translateX(-50%) scaleX(0.74);">OK</span>
<span class="r" style="top:296.56px;font-size:4.7px;line-height:5.64px;color:#008000;left:263.2px;transform:translateX(-50%);">2.930</span>
<span class="r" style="top:296.56px;font-size:4.7px;line-height:5.64px;color:#008000;left:287.6px;transform:translateX(-50%);">2.944</span>
<span class="r" style="top:296.56px;font-size:4.7px;line-height:5.64px;color:#008000;left:312px;transform:translateX(-50%);">2.595</span>
<span class="r" style="top:296.56px;font-size:4.7px;line-height:5.64px;color:#008000;left:336.5px;transform:translateX(-50%);">2.616</span>
<span class="r" style="top:296.56px;font-size:4.7px;line-height:5.64px;color:#008000;left:360.9px;transform:translateX(-50%);">2.582</span>
<span class="r" style="top:296.56px;font-size:4.7px;line-height:5.64px;color:#ff0000;left:385.4px;transform:translateX(-50%);">72.643</span>
<span class="r" style="top:296.56px;font-size:4.7px;line-height:5.64px;color:#ff0000;left:409.8px;transform:translateX(-50%);">-2.215</span>
<span class="r" style="top:296.56px;font-size:4.7px;line-height:5.64px;color:#ff0000;left:434.3px;transform:translateX(-50%);">-2.658</span>
<span class="r" style="top:296.56px;font-size:4.7px;line-height:5.64px;color:#008000;left:458.6px;transform:translateX(-50%);">0.134</span>
<span class="r" style="top:296.56px;font-size:4.7px;line-height:5.64px;color:#008000;left:482.9px;transform:translateX(-50%);">0.200</span>
<span class="r" style="top:305.83px;font-size:4.7px;line-height:5.64px;color:#222;left:22.6px;transform:translateX(-50%) scaleX(1.12);">18:05:10</span>
<span class="r" style="top:305.83px;font-size:4.7px;line-height:5.64px;color:#222;left:35.8px;">20210930_180510_244</span>
<span class="r" style="top:305.83px;font-size:4.7px;line-height:5.64px;color:#222;left:93.2px;transform:translateX(-50%);">PF0</span>
<span class="r" style="top:305.83px;font-size:4.7px;line-height:5.64px;color:#008000;left:116.6px;transform:translateX(-50%) scaleX(0.74);">OK</span>
<span class="r" style="top:305.83px;font-size:4.7px;line-height:5.64px;color:#008000;left:140.6px;transform:translateX(-50%) scaleX(0.74);">OK</span>
<span class="r" style="top:305.83px;font-size:4.7px;line-height:5.64px;color:#008000;left:165px;transform:translateX(-50%) scaleX(0.74);">OK</span>
<span class="r" style="top:305.83px;font-size:4.7px;line-height:5.64px;color:#008000;left:189.4px;transform:translateX(-50%) scaleX(0.74);">OK</span>
<span class="r" style="top:305.83px;font-size:4.7px;line-height:5.64px;color:#008000;left:213.8px;transform:translateX(-50%) scaleX(0.74);">OK</span>
<span class="r" style="top:305.83px;font-size:4.7px;line-height:5.64px;color:#008000;left:238.3px;transform:translateX(-50%) scaleX(0.74);">OK</span>
<span class="r" style="top:305.83px;font-size:4.7px;line-height:5.64px;color:#008000;left:263.2px;transform:translateX(-50%);">2.766</span>
<span class="r" style="top:305.83px;font-size:4.7px;line-height:5.64px;color:#008000;left:287.6px;transform:translateX(-50%);">2.787</span>
<span class="r" style="top:305.83px;font-size:4.7px;line-height:5.64px;color:#008000;left:312px;transform:translateX(-50%);">2.473</span>
<span class="r" style="top:305.83px;font-size:4.7px;line-height:5.64px;color:#008000;left:336.5px;transform:translateX(-50%);">2.597</span>
<span class="r" style="top:305.83px;font-size:4.7px;line-height:5.64px;color:#008000;left:360.9px;transform:translateX(-50%);">2.459</span>
<span class="r" style="top:305.83px;font-size:4.7px;line-height:5.64px;color:#008000;left:385.4px;transform:translateX(-50%);">66.585</span>
<span class="r" style="top:305.83px;font-size:4.7px;line-height:5.64px;color:#008000;left:409.8px;transform:translateX(-50%);">0.156</span>
<span class="r" style="top:305.83px;font-size:4.7px;line-height:5.64px;color:#ff0000;left:434.3px;transform:translateX(-50%);">1.025</span>
<span class="r" style="top:305.83px;font-size:4.7px;line-height:5.64px;color:#008000;left:458.6px;transform:translateX(-50%);">0.166</span>
<span class="r" style="top:305.83px;font-size:4.7px;line-height:5.64px;color:#ff0000;left:482.9px;transform:translateX(-50%);">0.124</span>
<span class="r" style="top:315.10px;font-size:4.7px;line-height:5.64px;color:#222;left:22.6px;transform:translateX(-50%) scaleX(1.12);">17:55:42</span>
<span class="r" style="top:315.10px;font-size:4.7px;line-height:5.64px;color:#222;left:35.8px;">20210930_175542_747</span>
<span class="r" style="top:315.10px;font-size:4.7px;line-height:5.64px;color:#222;left:93.2px;transform:translateX(-50%);">PF0</span>
<span class="r" style="top:315.10px;font-size:4.7px;line-height:5.64px;color:#008000;left:116.6px;transform:translateX(-50%) scaleX(0.74);">OK</span>
<span class="r" style="top:315.10px;font-size:4.7px;line-height:5.64px;color:#008000;left:140.6px;transform:translateX(-50%) scaleX(0.74);">OK</span>
<span class="r" style="top:315.10px;font-size:4.7px;line-height:5.64px;color:#008000;left:165px;transform:translateX(-50%) scaleX(0.74);">OK</span>
<span class="r" style="top:315.10px;font-size:4.7px;line-height:5.64px;color:#008000;left:189.4px;transform:translateX(-50%) scaleX(0.74);">OK</span>
<span class="r" style="top:315.10px;font-size:4.7px;line-height:5.64px;color:#008000;left:213.8px;transform:translateX(-50%) scaleX(0.74);">OK</span>
<span class="r" style="top:315.10px;font-size:4.7px;line-height:5.64px;color:#008000;left:238.3px;transform:translateX(-50%) scaleX(0.74);">OK</span>
<span class="r" style="top:315.10px;font-size:4.7px;line-height:5.64px;color:#008000;left:263.2px;transform:translateX(-50%);">2.936</span>
<span class="r" style="top:315.10px;font-size:4.7px;line-height:5.64px;color:#008000;left:287.6px;transform:translateX(-50%);">2.942</span>
<span class="r" style="top:315.10px;font-size:4.7px;line-height:5.64px;color:#008000;left:312px;transform:translateX(-50%);">2.590</span>
<span class="r" style="top:315.10px;font-size:4.7px;line-height:5.64px;color:#008000;left:336.5px;transform:translateX(-50%);">2.618</span>
<span class="r" style="top:315.10px;font-size:4.7px;line-height:5.64px;color:#008000;left:360.9px;transform:translateX(-50%);">2.583</span>
<span class="r" style="top:315.10px;font-size:4.7px;line-height:5.64px;color:#ff0000;left:385.4px;transform:translateX(-50%);">72.657</span>
<span class="r" style="top:315.10px;font-size:4.7px;line-height:5.64px;color:#ff0000;left:409.8px;transform:translateX(-50%);">-2.223</span>
<span class="r" style="top:315.10px;font-size:4.7px;line-height:5.64px;color:#ff0000;left:434.3px;transform:translateX(-50%);">-2.662</span>
<span class="r" style="top:315.10px;font-size:4.7px;line-height:5.64px;color:#008000;left:458.6px;transform:translateX(-50%);">0.136</span>
<span class="r" style="top:315.10px;font-size:4.7px;line-height:5.64px;color:#008000;left:482.9px;transform:translateX(-50%);">0.201</span>
<span class="r" style="top:324.37px;font-size:4.7px;line-height:5.64px;color:#222;left:22.6px;transform:translateX(-50%) scaleX(1.12);">17:55:36</span>
<span class="r" style="top:324.37px;font-size:4.7px;line-height:5.64px;color:#222;left:35.8px;">20210930_175536_810</span>
<span class="r" style="top:324.37px;font-size:4.7px;line-height:5.64px;color:#222;left:93.2px;transform:translateX(-50%);">PF0</span>
<span class="r" style="top:324.37px;font-size:4.7px;line-height:5.64px;color:#008000;left:116.6px;transform:translateX(-50%) scaleX(0.74);">OK</span>
<span class="r" style="top:324.37px;font-size:4.7px;line-height:5.64px;color:#008000;left:140.6px;transform:translateX(-50%) scaleX(0.74);">OK</span>
<span class="r" style="top:324.37px;font-size:4.7px;line-height:5.64px;color:#008000;left:165px;transform:translateX(-50%) scaleX(0.74);">OK</span>
<span class="r" style="top:324.37px;font-size:4.7px;line-height:5.64px;color:#008000;left:189.4px;transform:translateX(-50%) scaleX(0.74);">OK</span>
<span class="r" style="top:324.37px;font-size:4.7px;line-height:5.64px;color:#008000;left:213.8px;transform:translateX(-50%) scaleX(0.74);">OK</span>
<span class="r" style="top:324.37px;font-size:4.7px;line-height:5.64px;color:#008000;left:238.3px;transform:translateX(-50%) scaleX(0.74);">OK</span>
<span class="r" style="top:324.37px;font-size:4.7px;line-height:5.64px;color:#008000;left:263.2px;transform:translateX(-50%);">2.876</span>
<span class="r" style="top:324.37px;font-size:4.7px;line-height:5.64px;color:#008000;left:287.6px;transform:translateX(-50%);">2.869</span>
<span class="r" style="top:324.37px;font-size:4.7px;line-height:5.64px;color:#008000;left:312px;transform:translateX(-50%);">2.500</span>
<span class="r" style="top:324.37px;font-size:4.7px;line-height:5.64px;color:#008000;left:336.5px;transform:translateX(-50%);">2.507</span>
<span class="r" style="top:324.37px;font-size:4.7px;line-height:5.64px;color:#008000;left:360.9px;transform:translateX(-50%);">2.507</span>
<span class="r" style="top:324.37px;font-size:4.7px;line-height:5.64px;color:#008000;left:385.4px;transform:translateX(-50%);">66.882</span>
<span class="r" style="top:324.37px;font-size:4.7px;line-height:5.64px;color:#008000;left:409.8px;transform:translateX(-50%);">-0.098</span>
<span class="r" style="top:324.37px;font-size:4.7px;line-height:5.64px;color:#008000;left:434.3px;transform:translateX(-50%);">0.988</span>
<span class="r" style="top:324.37px;font-size:4.7px;line-height:5.64px;color:#ff0000;left:458.6px;transform:translateX(-50%);">0.000</span>
<span class="r" style="top:324.37px;font-size:4.7px;line-height:5.64px;color:#ff0000;left:482.9px;transform:translateX(-50%);">0.000</span>
<span class="r" style="top:333.64px;font-size:4.7px;line-height:5.64px;color:#222;left:22.6px;transform:translateX(-50%) scaleX(1.12);">17:52:46</span>
<span class="r" style="top:333.64px;font-size:4.7px;line-height:5.64px;color:#222;left:35.8px;">20210930_175246_164</span>
<span class="r" style="top:333.64px;font-size:4.7px;line-height:5.64px;color:#222;left:93.2px;transform:translateX(-50%);">PF0</span>
<span class="r" style="top:333.64px;font-size:4.7px;line-height:5.64px;color:#008000;left:116.6px;transform:translateX(-50%) scaleX(0.74);">OK</span>
<span class="r" style="top:333.64px;font-size:4.7px;line-height:5.64px;color:#008000;left:140.6px;transform:translateX(-50%) scaleX(0.74);">OK</span>
<span class="r" style="top:333.64px;font-size:4.7px;line-height:5.64px;color:#008000;left:165px;transform:translateX(-50%) scaleX(0.74);">OK</span>
<span class="r" style="top:333.64px;font-size:4.7px;line-height:5.64px;color:#008000;left:189.4px;transform:translateX(-50%) scaleX(0.74);">OK</span>
<span class="r" style="top:333.64px;font-size:4.7px;line-height:5.64px;color:#008000;left:213.8px;transform:translateX(-50%) scaleX(0.74);">OK</span>
<span class="r" style="top:333.64px;font-size:4.7px;line-height:5.64px;color:#008000;left:238.3px;transform:translateX(-50%) scaleX(0.74);">OK</span>
<span class="r" style="top:333.64px;font-size:4.7px;line-height:5.64px;color:#008000;left:263.2px;transform:translateX(-50%);">2.766</span>
<span class="r" style="top:333.64px;font-size:4.7px;line-height:5.64px;color:#008000;left:287.6px;transform:translateX(-50%);">2.787</span>
<span class="r" style="top:333.64px;font-size:4.7px;line-height:5.64px;color:#008000;left:312px;transform:translateX(-50%);">2.473</span>
<span class="r" style="top:333.64px;font-size:4.7px;line-height:5.64px;color:#008000;left:336.5px;transform:translateX(-50%);">2.597</span>
<span class="r" style="top:333.64px;font-size:4.7px;line-height:5.64px;color:#008000;left:360.9px;transform:translateX(-50%);">2.459</span>
<span class="r" style="top:333.64px;font-size:4.7px;line-height:5.64px;color:#008000;left:385.4px;transform:translateX(-50%);">66.585</span>
<span class="r" style="top:333.64px;font-size:4.7px;line-height:5.64px;color:#008000;left:409.8px;transform:translateX(-50%);">0.156</span>
<span class="r" style="top:333.64px;font-size:4.7px;line-height:5.64px;color:#ff0000;left:434.3px;transform:translateX(-50%);">1.025</span>
<span class="r" style="top:333.64px;font-size:4.7px;line-height:5.64px;color:#008000;left:458.6px;transform:translateX(-50%);">0.166</span>
<span class="r" style="top:333.64px;font-size:4.7px;line-height:5.64px;color:#ff0000;left:482.9px;transform:translateX(-50%);">0.124</span>
<span class="r" style="top:342.91px;font-size:4.7px;line-height:5.64px;color:#222;left:22.6px;transform:translateX(-50%) scaleX(1.12);">17:52:29</span>
<span class="r" style="top:342.91px;font-size:4.7px;line-height:5.64px;color:#222;left:35.8px;">20210930_175229_725</span>
<span class="r" style="top:342.91px;font-size:4.7px;line-height:5.64px;color:#222;left:93.2px;transform:translateX(-50%);">PF0</span>
<span class="r" style="top:342.91px;font-size:4.7px;line-height:5.64px;color:#ff0000;left:116.6px;transform:translateX(-50%) scaleX(0.74);">NG</span>
<span class="r" style="top:342.91px;font-size:4.7px;line-height:5.64px;color:#ff0000;left:140.6px;transform:translateX(-50%) scaleX(0.74);">NG</span>
<span class="r" style="top:342.91px;font-size:4.7px;line-height:5.64px;color:#008000;left:165px;transform:translateX(-50%) scaleX(0.74);">OK</span>
<span class="r" style="top:342.91px;font-size:4.7px;line-height:5.64px;color:#008000;left:189.4px;transform:translateX(-50%) scaleX(0.74);">OK</span>
<span class="r" style="top:342.91px;font-size:4.7px;line-height:5.64px;color:#008000;left:213.8px;transform:translateX(-50%) scaleX(0.74);">OK</span>
<span class="r" style="top:342.91px;font-size:4.7px;line-height:5.64px;color:#008000;left:238.3px;transform:translateX(-50%) scaleX(0.74);">OK</span>
<span class="r" style="top:342.91px;font-size:4.7px;line-height:5.64px;color:#ff0000;left:263.2px;transform:translateX(-50%);">0.000</span>
<span class="r" style="top:342.91px;font-size:4.7px;line-height:5.64px;color:#ff0000;left:287.6px;transform:translateX(-50%);">0.000</span>
<span class="r" style="top:342.91px;font-size:4.7px;line-height:5.64px;color:#ff0000;left:312px;transform:translateX(-50%);">0.000</span>
<span class="r" style="top:342.91px;font-size:4.7px;line-height:5.64px;color:#ff0000;left:336.5px;transform:translateX(-50%);">0.000</span>
<span class="r" style="top:342.91px;font-size:4.7px;line-height:5.64px;color:#ff0000;left:360.9px;transform:translateX(-50%);">0.000</span>
<span class="r" style="top:342.91px;font-size:4.7px;line-height:5.64px;color:#ff0000;left:385.4px;transform:translateX(-50%);">0.000</span>
<span class="r" style="top:342.91px;font-size:4.7px;line-height:5.64px;color:#008000;left:409.8px;transform:translateX(-50%);">0.000</span>
<span class="r" style="top:342.91px;font-size:4.7px;line-height:5.64px;color:#008000;left:434.3px;transform:translateX(-50%);">0.000</span>
<span class="r" style="top:342.91px;font-size:4.7px;line-height:5.64px;color:#ff0000;left:458.6px;transform:translateX(-50%);">0.000</span>
<span class="r" style="top:342.91px;font-size:4.7px;line-height:5.64px;color:#ff0000;left:482.9px;transform:translateX(-50%);">0.000</span>
<span class="r" style="top:352.18px;font-size:4.7px;line-height:5.64px;color:#222;left:22.6px;transform:translateX(-50%) scaleX(1.12);">17:52:08</span>
<span class="r" style="top:352.18px;font-size:4.7px;line-height:5.64px;color:#222;left:35.8px;">20210930_175208_756</span>
<span class="r" style="top:352.18px;font-size:4.7px;line-height:5.64px;color:#222;left:93.2px;transform:translateX(-50%);">PF0</span>
<span class="r" style="top:352.18px;font-size:4.7px;line-height:5.64px;color:#008000;left:116.6px;transform:translateX(-50%) scaleX(0.74);">OK</span>
<span class="r" style="top:352.18px;font-size:4.7px;line-height:5.64px;color:#008000;left:140.6px;transform:translateX(-50%) scaleX(0.74);">OK</span>
<span class="r" style="top:352.18px;font-size:4.7px;line-height:5.64px;color:#008000;left:165px;transform:translateX(-50%) scaleX(0.74);">OK</span>
<span class="r" style="top:352.18px;font-size:4.7px;line-height:5.64px;color:#008000;left:189.4px;transform:translateX(-50%) scaleX(0.74);">OK</span>
<span class="r" style="top:352.18px;font-size:4.7px;line-height:5.64px;color:#008000;left:213.8px;transform:translateX(-50%) scaleX(0.74);">OK</span>
<span class="r" style="top:352.18px;font-size:4.7px;line-height:5.64px;color:#008000;left:238.3px;transform:translateX(-50%) scaleX(0.74);">OK</span>
<span class="r" style="top:352.18px;font-size:4.7px;line-height:5.64px;color:#008000;left:263.2px;transform:translateX(-50%);">2.766</span>
<span class="r" style="top:352.18px;font-size:4.7px;line-height:5.64px;color:#008000;left:287.6px;transform:translateX(-50%);">2.787</span>
<span class="r" style="top:352.18px;font-size:4.7px;line-height:5.64px;color:#008000;left:312px;transform:translateX(-50%);">2.473</span>
<span class="r" style="top:352.18px;font-size:4.7px;line-height:5.64px;color:#008000;left:336.5px;transform:translateX(-50%);">2.597</span>
<span class="r" style="top:352.18px;font-size:4.7px;line-height:5.64px;color:#008000;left:360.9px;transform:translateX(-50%);">2.459</span>
<span class="r" style="top:352.18px;font-size:4.7px;line-height:5.64px;color:#008000;left:385.4px;transform:translateX(-50%);">66.585</span>
<span class="r" style="top:352.18px;font-size:4.7px;line-height:5.64px;color:#008000;left:409.8px;transform:translateX(-50%);">0.156</span>
<span class="r" style="top:352.18px;font-size:4.7px;line-height:5.64px;color:#ff0000;left:434.3px;transform:translateX(-50%);">1.025</span>
<span class="r" style="top:352.18px;font-size:4.7px;line-height:5.64px;color:#008000;left:458.6px;transform:translateX(-50%);">0.166</span>
<span class="r" style="top:352.18px;font-size:4.7px;line-height:5.64px;color:#ff0000;left:482.9px;transform:translateX(-50%);">0.124</span>
<svg style="left:11.6px;top:368px" width="294" height="75.4" viewBox="11.6 368 294 75.4"><rect x="12.300" y="368.800" width="292.600" height="74" fill="#fff" stroke="#1c1c1c" stroke-width="1.300"/><rect x="12.300" y="430.200" width="292.600" height="12.600" fill="#000"/><rect x="24.800" y="403" width="270" height="20.600" fill="#ffc000"/><rect x="24.600" y="403" width=".7" height="20.600" fill="#8fb6d8"/><rect x="294.400" y="403" width=".7" height="20.600" fill="#8fb6d8"/><path d="M64.4 386H88.4M76.4 377.400V394.800" stroke="#0a0a0a" stroke-width="5.600" fill="none"/><path d="M228 386H252M240 377.400V394.800" stroke="#0a0a0a" stroke-width="5.600" fill="none"/><path d="M24.800 374V414M76.400 369.500V413M240 369.500V413M294.500 372V415" stroke="#ff1818" stroke-width=".95" fill="none" stroke-dasharray="2.400 1.600"/><path d="M30 386H116M191 386H276" stroke="#ff3030" stroke-width=".9" fill="none" stroke-dasharray="3.600 2.200"/><path d="M25.2 391.7H76" stroke="#ff0000" stroke-width="0.5" fill="none"/><path d="M25.2 391.7l3.600-1.400v2.800z" fill="#ff0000"/><path d="M76 391.7l-3.600-1.400v2.800z" fill="#ff0000"/><path d="M240.5 391.5H294.2" stroke="#ff0000" stroke-width="0.5" fill="none"/><path d="M240.5 391.5l3.600-1.400v2.800z" fill="#ff0000"/><path d="M294.2 391.5l-3.600-1.400v2.800z" fill="#ff0000"/><path d="M91.5 386.4V402.8" stroke="#ff0000" stroke-width="0.5" fill="none"/><path d="M91.5 386.4l-1.400 3.400h2.800z" fill="#ff0000"/><path d="M91.5 402.8l-1.400-3.400h2.800z" fill="#ff0000"/><path d="M213 386.4V402.8" stroke="#ff0000" stroke-width="0.5" fill="none"/><path d="M213 386.4l-1.400 3.400h2.800z" fill="#ff0000"/><path d="M213 402.8l-1.400-3.400h2.800z" fill="#ff0000"/><path d="M57.6 403.2V423.4" stroke="#ff0000" stroke-width="0.5" fill="none"/><path d="M57.6 403.2l-1.400 3.400h2.800z" fill="#ff0000"/><path d="M57.6 423.4l-1.400-3.400h2.800z" fill="#ff0000"/><path d="M173.5 403.2V423.4" stroke="#ff0000" stroke-width="0.5" fill="none"/><path d="M173.5 403.2l-1.400 3.400h2.800z" fill="#ff0000"/><path d="M173.5 423.4l-1.400-3.400h2.800z" fill="#ff0000"/><path d="M261.7 403.2V423.4" stroke="#ff0000" stroke-width="0.5" fill="none"/><path d="M261.7 403.2l-1.400 3.400h2.800z" fill="#ff0000"/><path d="M261.7 423.4l-1.400-3.400h2.800z" fill="#ff0000"/><path d="M25.2 414.5H294.2" stroke="#ff0000" stroke-width="0.5" fill="none"/><path d="M25.2 414.5l3.600-1.400v2.800z" fill="#ff0000"/><path d="M294.2 414.5l-3.600-1.400v2.800z" fill="#ff0000"/><path d="M57.6 423.600V430" stroke="#ff0000" stroke-width=".5"/><path d="M57.6 423.800l-1.400 2.600h2.800zM57.6 430.200l-1.400-2.600h2.800z" fill="#ff0000"/><path d="M173.5 423.600V430" stroke="#ff0000" stroke-width=".5"/><path d="M173.5 423.800l-1.400 2.600h2.800zM173.5 430.200l-1.400-2.600h2.800z" fill="#ff0000"/><path d="M261.7 423.600V430" stroke="#ff0000" stroke-width=".5"/><path d="M261.7 423.800l-1.400 2.600h2.800zM261.7 430.200l-1.400-2.600h2.800z" fill="#ff0000"/><text x="39.6" y="398.8" font-family="Liberation Serif,Noto Serif CJK SC,serif" font-size="7.2" fill="#55a84a" textLength="18.6" lengthAdjust="spacingAndGlyphs">1.075</text><text x="92.8" y="396.8" font-family="Liberation Serif,Noto Serif CJK SC,serif" font-size="7.2" fill="#55a84a" textLength="18.6" lengthAdjust="spacingAndGlyphs">2.883</text><text x="191" y="398.8" font-family="Liberation Serif,Noto Serif CJK SC,serif" font-size="7.2" fill="#55a84a" textLength="18.8" lengthAdjust="spacingAndGlyphs">2.903</text><text x="256.6" y="398.8" font-family="Liberation Serif,Noto Serif CJK SC,serif" font-size="7.2" fill="#55a84a" textLength="19" lengthAdjust="spacingAndGlyphs">0.212</text><text x="58.6" y="412.8" font-family="Liberation Serif,Noto Serif CJK SC,serif" font-size="7.2" fill="#6aa332" textLength="18.6" lengthAdjust="spacingAndGlyphs">2.442</text><text x="116.6" y="413.8" font-family="Liberation Serif,Noto Serif CJK SC,serif" font-size="7.2" fill="#6aa332" textLength="23.4" lengthAdjust="spacingAndGlyphs">66.475</text><text x="176" y="412.6" font-family="Liberation Serif,Noto Serif CJK SC,serif" font-size="7.2" fill="#6aa332" textLength="18.8" lengthAdjust="spacingAndGlyphs">2.504</text><text x="263.6" y="413.6" font-family="Liberation Serif,Noto Serif CJK SC,serif" font-size="7.2" fill="#6aa332" textLength="19" lengthAdjust="spacingAndGlyphs">2.463</text><text x="48.6" y="437.6" font-family="Liberation Serif,Noto Serif CJK SC,serif" font-size="6.6" fill="#d01010" textLength="19.4" lengthAdjust="spacingAndGlyphs">0.089</text><text x="164" y="437.4" font-family="Liberation Serif,Noto Serif CJK SC,serif" font-size="6.2" fill="#1f7a1f" textLength="15" lengthAdjust="spacingAndGlyphs">0.211</text><text x="251.4" y="437.4" font-family="Liberation Serif,Noto Serif CJK SC,serif" font-size="6.2" fill="#1f7a1f" textLength="15.6" lengthAdjust="spacingAndGlyphs">0.218</text><text x="148.2" y="418.3" font-family="Liberation Sans,Noto Sans CJK SC,sans-serif" font-size="13.4" fill="#ffffff" textLength="23.2" lengthAdjust="spacingAndGlyphs">UV</text><text x="143" y="438.8" font-family="Liberation Sans,Noto Sans CJK SC,sans-serif" font-size="6.4" fill="#ffffff" textLength="17.6" lengthAdjust="spacingAndGlyphs" font-weight="bold">POL</text></svg>
<span class="f" style="top:445.36px;font-size:4.4px;line-height:5.28px;color:#222;left:14.2px;transform-origin:0 50%;transform:scaleX(0.95);">CPK曲线</span>
<div style="left:12.6px;top:451.2px;width:211px;height:71.3px;background:#ffffff;border:0.4px solid #e2e2e2;"></div>
<svg style="left:12.6px;top:451.2px" width="211" height="71.3" viewBox="12.6 451.2 211 71.3"><path d="M22 458.0h8" stroke="#4f9de0" stroke-width=".8"/><circle cx="26" cy="458.0" r=".8" fill="#4f9de0"/><text x="32.5" y="459.6" font-family="Liberation Sans,Noto Sans CJK SC,sans-serif" font-size="4.500" fill="#555">L_MARK</text><path d="M22 463.4h8" stroke="#f0a040" stroke-width=".8"/><circle cx="26" cy="463.4" r=".8" fill="#f0a040"/><text x="32.5" y="465.0" font-family="Liberation Sans,Noto Sans CJK SC,sans-serif" font-size="4.500" fill="#555">R_MARK</text><path d="M22 468.8h8" stroke="#e0602a" stroke-width=".8"/><circle cx="26" cy="468.8" r=".8" fill="#e0602a"/><text x="32.5" y="470.40000000000003" font-family="Liberation Sans,Noto Sans CJK SC,sans-serif" font-size="4.500" fill="#555">L_WIDTH</text><path d="M57 458.0h8" stroke="#1f6f9f" stroke-width=".8"/><circle cx="61" cy="458.0" r=".8" fill="#1f6f9f"/><text x="67.5" y="459.6" font-family="Liberation Sans,Noto Sans CJK SC,sans-serif" font-size="4.500" fill="#555">M_WIDTH</text><path d="M57 463.4h8" stroke="#c8c8c8" stroke-width=".8"/><circle cx="61" cy="463.4" r=".8" fill="#c8c8c8"/><text x="67.5" y="465.0" font-family="Liberation Sans,Noto Sans CJK SC,sans-serif" font-size="4.500" fill="#555">R_WIDTH</text><path d="M92.5 458.0h8" stroke="#2a4a8a" stroke-width=".8"/><circle cx="96.5" cy="458.0" r=".8" fill="#2a4a8a"/><text x="103.0" y="459.6" font-family="Liberation Sans,Noto Sans CJK SC,sans-serif" font-size="4.500" fill="#555">L_EDGE</text><path d="M92.5 463.4h8" stroke="#f5d070" stroke-width=".8"/><circle cx="96.5" cy="463.4" r=".8" fill="#f5d070"/><text x="103.0" y="465.0" font-family="Liberation Sans,Noto Sans CJK SC,sans-serif" font-size="4.500" fill="#555">R_EDGE</text><path d="M125.5 458.0h8" stroke="#38a8e0" stroke-width=".8"/><circle cx="129.5" cy="458.0" r=".8" fill="#38a8e0"/><text x="136.0" y="459.6" font-family="Liberation Sans,Noto Sans CJK SC,sans-serif" font-size="4.500" fill="#555">L_GAP</text><path d="M125.5 463.4h8" stroke="#d06040" stroke-width=".8"/><circle cx="129.5" cy="463.4" r=".8" fill="#d06040"/><text x="136.0" y="465.0" font-family="Liberation Sans,Noto Sans CJK SC,sans-serif" font-size="4.500" fill="#555">M_GAP</text><path d="M157 458.0h8" stroke="#2a60c8" stroke-width=".8"/><circle cx="161" cy="458.0" r=".8" fill="#2a60c8"/><text x="167.5" y="459.6" font-family="Liberation Sans,Noto Sans CJK SC,sans-serif" font-size="4.500" fill="#555">R_GAP</text><path d="M157 463.4h8" stroke="#f0c878" stroke-width=".8"/><circle cx="161" cy="463.4" r=".8" fill="#f0c878"/><text x="167.5" y="465.0" font-family="Liberation Sans,Noto Sans CJK SC,sans-serif" font-size="4.500" fill="#555">LENGTH</text></svg>
<div style="left:226px;top:446px;width:78.5px;height:76.6px;background:#90ee90;border:0.5px solid #a9cfe8;"></div>
<div style="left:226px;top:446px;width:78.5px;height:5.8px;background:#9fd0ea;"></div>
<span class="f" style="top:476.10px;font-size:20px;line-height:24.00px;left:264.2px;transform:translateX(-50%);-webkit-text-stroke:0.35px #000;">OK</span>
<div style="left:308.6px;top:366.2px;width:193px;height:158.5px;background:#f5f5f5;border:0.5px solid #dcdcdc;"></div>
<div style="left:309.6px;top:366.6px;width:22.5px;height:8px;background:#ffffff;border:0.4px solid #d9d9d9;border-bottom:none;"></div>
<div style="left:332.1px;top:367.6px;width:16.5px;height:7px;background:#f2f2f2;border:1px solid #e6e6e6;"></div>
<div style="left:348.6px;top:367.6px;width:18px;height:7px;background:#f2f2f2;border:1px solid #e6e6e6;"></div>
<span class="f" style="top:367.94px;font-size:4.6px;line-height:5.52px;color:#222;left:311.4px;">日志显示</span>
<span class="f" style="top:368.44px;font-size:4.6px;line-height:5.52px;color:#222;left:335.3px;">心跳</span>
<span class="f" style="top:368.44px;font-size:4.6px;line-height:5.52px;color:#222;left:353.2px;">统计</span>
<span class="f" style="top:375.44px;font-size:4.6px;line-height:5.52px;color:#222;left:313.8px;">运行时信息</span>
<div style="left:340.5px;top:375.8px;width:5.4px;height:5.4px;background:#fff;border:1px solid #8a8a8a;"></div>
<div style="left:310.8px;top:381.8px;width:186.2px;height:141px;background:#f0f0f0;border:1px solid #bdbdbd;"></div>
<span class="r" style="top:382.16px;font-size:5.4px;line-height:6.48px;color:#222;left:312.2px;transform-origin:0 50%;transform:scaleX(1.14);">Clear is click</span>
<svg style="left:490.500px;top:383px" width="5" height="139" viewBox="0 0 5 139"><path d="M1 3.500l1.500-1.600 1.500 1.600M1 135.500l1.500 1.600 1.500-1.600" fill="none" stroke="#999" stroke-width=".5"/></svg>
<span class="f" style="top:538.44px;font-size:7.1px;line-height:8.52px;color:#111;font-weight:bold;left:9.2px;transform-origin:0 50%;transform:scaleX(0.86);">网络状态:</span>
<div style="left:38.1px;top:537.7px;width:10.6px;height:7.4px;background:#ff0000;"></div>
<span class="f" style="top:538.44px;font-size:7.1px;line-height:8.52px;color:#111;font-weight:bold;left:51px;transform-origin:0 50%;transform:scaleX(0.9);">当前产品:</span>
<div style="left:80.6px;top:538.2px;width:12.800000000000011px;height:8px;border:1px solid #d4d4d4;border-right-color:#fcfcfc;border-bottom-color:#fcfcfc;"></div>
<span class="f" style="top:538.44px;font-size:7.1px;line-height:8.52px;color:#111;font-weight:bold;left:87px;transform:translateX(-50%);">52</span>
<div style="left:94.8px;top:538.2px;width:45.7px;height:8px;border:1px solid #d4d4d4;border-right-color:#fcfcfc;border-bottom-color:#fcfcfc;"></div>
<span class="f" style="top:538.44px;font-size:7.1px;line-height:8.52px;color:#111;font-weight:bold;left:97.3px;transform-origin:0 50%;transform:scaleX(0.9);">扫描时间(ms):</span>
<div style="left:141.6px;top:538.2px;width:14.800000000000011px;height:8px;border:1px solid #d4d4d4;border-right-color:#fcfcfc;border-bottom-color:#fcfcfc;"></div>
<span class="f" style="top:538.44px;font-size:7.1px;line-height:8.52px;color:#111;font-weight:bold;left:149px;transform:translateX(-50%);">367</span>
<div style="left:157.6px;top:538.2px;width:18.400000000000006px;height:8px;border:1px solid #d4d4d4;border-right-color:#fcfcfc;border-bottom-color:#fcfcfc;"></div>
<span class="f" style="top:538.44px;font-size:7.1px;line-height:8.52px;color:#111;font-weight:bold;left:159.3px;transform-origin:0 50%;transform:scaleX(0.9);">总数:</span>
<div style="left:177.2px;top:538.2px;width:24.400000000000006px;height:8px;border:1px solid #d4d4d4;border-right-color:#fcfcfc;border-bottom-color:#fcfcfc;"></div>
<span class="f" style="top:538.44px;font-size:7.1px;line-height:8.52px;color:#111;font-weight:bold;left:189.4px;transform:translateX(-50%);">35062</span>
<div style="left:202.7px;top:538.2px;width:20.30000000000001px;height:8px;border:1px solid #d4d4d4;border-right-color:#fcfcfc;border-bottom-color:#fcfcfc;"></div>
<span class="f" style="top:538.44px;font-size:7.1px;line-height:8.52px;color:#111;font-weight:bold;left:204.3px;transform-origin:0 50%;transform:scaleX(0.9);">OK数:</span>
<div style="left:224.2px;top:538.2px;width:24.200000000000017px;height:8px;border:1px solid #d4d4d4;border-right-color:#fcfcfc;border-bottom-color:#fcfcfc;"></div>
<span class="f" style="top:538.44px;font-size:7.1px;line-height:8.52px;color:#111;font-weight:bold;left:236.3px;transform:translateX(-50%);">33766</span>
<div style="left:249.6px;top:538.2px;width:23.099999999999994px;height:8px;border:1px solid #d4d4d4;border-right-color:#fcfcfc;border-bottom-color:#fcfcfc;"></div>
<span class="f" style="top:538.44px;font-size:7.1px;line-height:8.52px;color:#111;font-weight:bold;left:251.6px;transform-origin:0 50%;transform:scaleX(0.9);">NG数:</span>
<div style="left:273.8px;top:538.2px;width:19.80000000000001px;height:8px;border:1px solid #d4d4d4;border-right-color:#fcfcfc;border-bottom-color:#fcfcfc;"></div>
<span class="f" style="top:538.44px;font-size:7.1px;line-height:8.52px;color:#111;font-weight:bold;left:283.6px;transform:translateX(-50%);">1296</span>
<div style="left:294.8px;top:538.2px;width:18.399999999999977px;height:8px;border:1px solid #d4d4d4;border-right-color:#fcfcfc;border-bottom-color:#fcfcfc;"></div>
<span class="f" style="top:538.44px;font-size:7.1px;line-height:8.52px;color:#111;font-weight:bold;left:296.4px;transform-origin:0 50%;transform:scaleX(0.9);">良率:</span>
<div style="left:314.4px;top:538.2px;width:31.600000000000023px;height:8px;border:1px solid #d4d4d4;border-right-color:#fcfcfc;border-bottom-color:#fcfcfc;"></div>
<span class="f" style="top:538.44px;font-size:7.1px;line-height:8.52px;color:#111;font-weight:bold;left:330.2px;transform:translateX(-50%);">96.304%</span>
<div style="left:347.2px;top:538.2px;width:43.19999999999999px;height:8px;border:1px solid #d4d4d4;border-right-color:#fcfcfc;border-bottom-color:#fcfcfc;"></div>
<span class="f" style="top:538.44px;font-size:7.1px;line-height:8.52px;color:#111;font-weight:bold;left:349px;transform-origin:0 50%;transform:scaleX(0.9);">相机触发次数:</span>
<div style="left:391.6px;top:538.2px;width:15.399999999999977px;height:8px;border:1px solid #d4d4d4;border-right-color:#fcfcfc;border-bottom-color:#fcfcfc;"></div>
<span class="f" style="top:538.44px;font-size:7.1px;line-height:8.52px;color:#111;font-weight:bold;left:399.3px;transform:translateX(-50%);">0/1</span>
<div style="left:7px;top:546px;width:496px;height:3px;background:#1d2a3a;"></div>
<div style="left:84px;top:546px;width:17px;height:3px;background:#5d6b7c;"></div>
<div style="left:503.2px;top:4.2px;width:494.6px;height:543px;background:#f0f0f0;border-left:1px solid #dedede;"></div>
<div style="left:503.8px;top:4.2px;width:494px;height:11.8px;background:#ffffff;"></div>
<svg style="left:506.600px;top:5.800px" width="6" height="6" viewBox="0 0 12 12"><path d="M2 10.500h8M3.500 8.500h5M6.200 8.500c-2-2.500-1.500-5 1.300-7-1 2.500.2 3.500 1 5" fill="none" stroke="#3b3b8c" stroke-width="1.300"/></svg>
<span class="f" style="top:7.28px;font-size:4.7px;line-height:5.64px;color:#8a8a8a;left:512.6px;transform-origin:0 50%;transform:scaleX(1.06);">Csray微射联3D测厚程序</span>
<svg style="left:948px;top:6px" width="46" height="8" viewBox="0 0 46 8"><path d="M3 4h3.600" stroke="#bbb" stroke-width=".6"/><rect x="20.500" y="2.200" width="3.800" height="3.400" fill="none" stroke="#bbb" stroke-width=".6"/><path d="M39 2l3.800 3.800M42.800 2L39 5.800" stroke="#ccc" stroke-width=".6"/></svg>
<div style="left:506.1px;top:18.6px;width:27.399999999999977px;height:8.2px;background:#e1e1e1;border:1px solid #c4c4c4;"></div>
<span class="f" style="top:20.10px;font-size:4.5px;line-height:5.40px;color:#222;left:519.8px;transform:translateX(-50%) scaleX(1);">参数设置</span>
<div style="left:540.5px;top:18.6px;width:28.399999999999977px;height:8.2px;background:#e1e1e1;border:1px solid #c4c4c4;"></div>
<span class="f" style="top:20.10px;font-size:4.5px;line-height:5.40px;color:#222;left:554.7px;transform:translateX(-50%) scaleX(1);">产品管理</span>
<div style="left:575.1px;top:18.6px;width:28.399999999999977px;height:8.2px;background:#e1e1e1;border:1px solid #c4c4c4;"></div>
<span class="f" style="top:20.10px;font-size:4.5px;line-height:5.40px;color:#222;left:589.3px;transform:translateX(-50%) scaleX(0.86);">3D数据管理</span>
<div style="left:610.5px;top:18.6px;width:28px;height:8.2px;background:#e1e1e1;border:1px solid #c4c4c4;"></div>
<span class="f" style="top:20.10px;font-size:4.5px;line-height:5.40px;color:#222;left:624.5px;transform:translateX(-50%) scaleX(1);">3D调试</span>
<div style="left:645.0px;top:18.6px;width:28.5px;height:8.2px;background:#e1e1e1;border:1px solid #c4c4c4;"></div>
<span class="f" style="top:20.10px;font-size:4.5px;line-height:5.40px;color:#222;left:659.25px;transform:translateX(-50%) scaleX(1);">平面图</span>
<div style="left:680.5px;top:18.6px;width:28px;height:8.2px;background:#e1e1e1;border:1px solid #c4c4c4;"></div>
<span class="f" style="top:20.10px;font-size:4.5px;line-height:5.40px;color:#222;left:694.5px;transform:translateX(-50%) scaleX(0.86);">3D点云图</span>
<div style="left:714.6px;top:20.2px;width:5.4px;height:5.4px;background:#fff;border:1px solid #8a8a8a;"></div>
<svg style="left:715.200px;top:20.800px" width="4" height="4" viewBox="0 0 4 4"><path d="M.6 2l1 1.100 1.800-2.300" fill="none" stroke="#222" stroke-width=".6"/></svg>
<span class="f" style="top:20.10px;font-size:4.5px;line-height:5.40px;color:#222;left:722px;">移动图片</span>
<div style="left:750px;top:20.2px;width:5.4px;height:5.4px;background:#fff;border:1px solid #8a8a8a;"></div>
<span class="f" style="top:20.10px;font-size:4.5px;line-height:5.40px;color:#222;left:757px;">显示高度截面数据</span>
<div style="left:506px;top:31.7px;width:19.2px;height:8.4px;background:#ffffff;border:0.4px solid #d9d9d9;border-bottom:none;"></div>
<span class="f" style="top:32.68px;font-size:5.2px;line-height:6.24px;left:508.2px;">当前</span>
<div style="left:525.2px;top:32.9px;width:18.7px;height:7.2px;background:#f3f3f3;border:0.4px solid #e2e2e2;border-bottom:none;"></div>
<span class="r" style="top:33.72px;font-size:5.3px;line-height:6.36px;left:527.6px;">A1</span>
<div style="left:543.9px;top:32.9px;width:18.4px;height:7.2px;background:#f3f3f3;border:0.4px solid #e2e2e2;border-bottom:none;"></div>
<span class="r" style="top:33.72px;font-size:5.3px;line-height:6.36px;left:546.3px;">A2</span>
<div style="left:562.3px;top:32.9px;width:18.4px;height:7.2px;background:#f3f3f3;border:0.4px solid #e2e2e2;border-bottom:none;"></div>
<span class="r" style="top:33.72px;font-size:5.3px;line-height:6.36px;left:564.6999999999999px;">B1</span>
<div style="left:580.7px;top:32.9px;width:17.2px;height:7.2px;background:#f3f3f3;border:0.4px solid #e2e2e2;border-bottom:none;"></div>
<span class="r" style="top:33.72px;font-size:5.3px;line-height:6.36px;left:583.1px;">B2</span>
<div style="left:505.6px;top:39.8px;width:490.4px;height:302.6px;background:#f7f7f7;border:0.5px solid #dcdcdc;"></div>
<div style="left:507.4px;top:47px;width:486px;height:9px;background:#f0f0f0;"></div>
<span class="r" style="top:49.30px;font-size:5px;line-height:6.00px;color:#222;left:509.8px;">Mode</span>
<svg style="left:523.0px;top:51.0px" width="2.4" height="1.8" viewBox="0 0 4 3"><path d="M0 0h4l-2 3z" fill="#333"/></svg>
<div style="left:527.6px;top:47.900000000000006px;width:83.0px;height:7.8px;background:#f1f1f1;border:1px solid #d0d0d0;border-right-color:#fbfbfb;border-bottom-color:#fbfbfb;"></div>
<span class="r" style="top:49.38px;font-size:4.7px;line-height:5.64px;color:#333;left:569.1px;transform:translateX(-50%);">( X 579, Y 1 ) : ( Gray 10000.000 )</span>
<div style="left:611.8000000000001px;top:47.900000000000006px;width:15.399999999999954px;height:7.8px;background:#f1f1f1;border:1px solid #d0d0d0;border-right-color:#fbfbfb;border-bottom-color:#fbfbfb;"></div>
<div style="left:628.4px;top:47.900000000000006px;width:362.6px;height:7.8px;background:#f1f1f1;border:1px solid #d0d0d0;border-right-color:#fbfbfb;border-bottom-color:#fbfbfb;"></div>
<svg style="left:507.6px;top:55.6px" width="485.4" height="285.6" viewBox="507.6 55.6 485.4 285.6"><defs>
<linearGradient id="ff" gradientUnits="userSpaceOnUse" x1="700" y1="88" x2="726.500" y2="269">
<stop offset="0" stop-color="#0612c8"/><stop offset=".1" stop-color="#0a22da"/><stop offset=".15" stop-color="#0c2ee0"/><stop offset=".175" stop-color="#0e58dc"/>
<stop offset=".25" stop-color="#0c84cc"/><stop offset=".33" stop-color="#00a0b0"/><stop offset=".43" stop-color="#00a884"/><stop offset=".52" stop-color="#00a040"/>
<stop offset=".59" stop-color="#08a20a"/><stop offset=".645" stop-color="#2ee018"/><stop offset=".68" stop-color="#48ff28"/>
<stop offset=".72" stop-color="#2cdc10"/><stop offset=".78" stop-color="#1ea800"/><stop offset=".9" stop-color="#3c9c00"/>
<stop offset=".96" stop-color="#6e9400"/><stop offset="1" stop-color="#a88400"/></linearGradient>
<linearGradient id="lf" gradientUnits="userSpaceOnUse" x1="580" y1="106" x2="592" y2="226">
<stop offset="0" stop-color="#1058f0"/><stop offset=".2" stop-color="#0c6ce0"/><stop offset=".36" stop-color="#0894b0"/>
<stop offset=".55" stop-color="#18a070"/><stop offset=".75" stop-color="#48a030"/><stop offset=".9" stop-color="#8a9410"/><stop offset="1" stop-color="#b88a08"/></linearGradient>
<linearGradient id="rf" gradientUnits="userSpaceOnUse" x1="890" y1="80" x2="884" y2="165">
<stop offset="0" stop-color="#0a30d8"/><stop offset=".3" stop-color="#08689c"/><stop offset=".6" stop-color="#208858"/><stop offset="1" stop-color="#6a8a20"/></linearGradient>
<pattern id="tex" width="3.400" height="8" patternUnits="userSpaceOnUse"><rect width="1.200" height="8" fill="#2050ff" opacity=".4"/></pattern>
<pattern id="gtex" width="2.600" height="8" patternUnits="userSpaceOnUse"><rect width=".9" height="8" fill="#0a9a0a" opacity=".4"/></pattern>
</defs><rect x="507.6" y="55.6" width="485.4" height="285.6" fill="#000"/><path d="M560 209.500L904 160L952.500 265L572.500 324.500z" fill="#eedc08"/><path d="M885 163L904 160L952.500 265L885 275.600z" fill="#dccb08"/><path d="M572.500 324.500L574.600 341" stroke="#ff5a10" stroke-width="1"/><path d="M567.800 119.600L571 115.500L575 113.600L578 116L582 109L590 104.500L597.500 120L601.500 222.400L583.300 226.200z" fill="url(#lf)"/><path d="M870 96L897.500 87.500L886 164L876 161L869.500 130z" fill="url(#rf)"/><path d="M590 103.9L594.2 104.1L597.9 102.7L602.4 103.0L606.2 101.9L609.3 100.4L612.7 100.9L615.4 100.9L618.5 99.4L621.1 100.3L625.4 99.4L629.4 97.2L632.8 97.5L635.6 97.8L639.0 95.8L643.5 95.2L648.3 95.2L652.2 94.5L655.9 93.7L658.5 94.6L661.6 94.1L664.6 94.1L669.4 93.1L673.8 92.2L678.1 90.9L681.8 91.7L684.8 91.5L689.5 89.9L692.9 89.6L696.4 90.1L699.9 88.0L702.6 88.9L707.6 87.9L711.3 87.6L715.7 86.5L719.7 86.6L723.8 85.5L726.7 85.4L731.5 84.9L735.5 84.3L738.2 83.6L742.8 84.3L746.2 83.8L750.4 83.7L755.3 82.2L760.3 82.6L764.3 81.9L768.0 80.5L771.1 81.1L774.0 79.2L778.5 80.0L782.2 79.6L784.9 78.2L788.1 78.1L791.0 77.1L794.4 78.2L799.3 77.3L803.0 75.8L807.9 75.5L812.2 73.9L815.3 74.8L819.7 74.1L823.8 72.6L827.7 72.7L831.0 71.6L834.2 71.5L836.7 70.9L841.6 68.8L845.6 69.0L850.2 67.9L853.3 66.8L858.2 66.6L861.1 64.5L863.8 63.8L867.5 63.8L889 66L897.500 87.500L874 97.500L870 130L875 160L881 172L885 195L885.200 244L615.300 284L596.400 143z" fill="url(#ff)"/><path d="M872 150L876 162L881 172L884.500 190L884.500 206L878 200L874 180z" fill="#30ff20" opacity=".55"/><rect x="592.0" y="105.2" width="0.9" height="19.7" fill="#0008a0" opacity="0.18"/><rect x="594.2" y="104.8" width="0.9" height="29.3" fill="#4070ff" opacity="0.4"/><rect x="597.1" y="104.3" width="0.7" height="20.2" fill="#2848f8" opacity="0.4"/><rect x="599.9" y="103.9" width="1.4" height="24.1" fill="#3060ff" opacity="0.18"/><rect x="602.4" y="103.5" width="1.1" height="18.8" fill="#2848f8" opacity="0.25"/><rect x="605.9" y="102.9" width="1.4" height="25.3" fill="#2848f8" opacity="0.18"/><rect x="607.8" y="102.6" width="1.4" height="26.7" fill="#000c90" opacity="0.32"/><rect x="611.3" y="102.0" width="1.1" height="19.2" fill="#000c90" opacity="0.18"/><rect x="614.9" y="101.4" width="1.1" height="21.7" fill="#3060ff" opacity="0.25"/><rect x="618.4" y="100.8" width="0.7" height="22.3" fill="#4070ff" opacity="0.32"/><rect x="621.7" y="100.3" width="0.7" height="25.8" fill="#000c90" opacity="0.4"/><rect x="624.7" y="99.8" width="1.4" height="26.5" fill="#000c90" opacity="0.4"/><rect x="628.1" y="99.3" width="1.4" height="18.8" fill="#3060ff" opacity="0.18"/><rect x="629.7" y="99.0" width="1.4" height="21.3" fill="#4070ff" opacity="0.4"/><rect x="632.9" y="98.5" width="0.9" height="22.8" fill="#4070ff" opacity="0.32"/><rect x="635.8" y="98.0" width="1.4" height="29.6" fill="#3060ff" opacity="0.18"/><rect x="637.7" y="97.7" width="1.1" height="22.5" fill="#4070ff" opacity="0.25"/><rect x="639.8" y="97.3" width="1.4" height="29.0" fill="#0008a0" opacity="0.4"/><rect x="643.1" y="96.9" width="1.1" height="29.6" fill="#2848f8" opacity="0.18"/><rect x="645.1" y="96.7" width="0.9" height="28.5" fill="#3060ff" opacity="0.25"/><rect x="646.8" y="96.4" width="0.7" height="21.6" fill="#4070ff" opacity="0.4"/><rect x="650.4" y="96.0" width="1.1" height="20.0" fill="#2848f8" opacity="0.4"/><rect x="652.8" y="95.7" width="0.7" height="25.0" fill="#0008a0" opacity="0.25"/><rect x="656.3" y="95.3" width="0.9" height="21.9" fill="#2848f8" opacity="0.32"/><rect x="658.4" y="95.0" width="1.4" height="26.3" fill="#2848f8" opacity="0.4"/><rect x="660.9" y="94.7" width="1.4" height="23.2" fill="#2848f8" opacity="0.32"/><rect x="663.7" y="94.3" width="1.1" height="19.2" fill="#3060ff" opacity="0.25"/><rect x="667.0" y="93.9" width="0.7" height="29.2" fill="#3060ff" opacity="0.32"/><rect x="669.6" y="93.6" width="0.9" height="18.5" fill="#4070ff" opacity="0.4"/><rect x="673.1" y="93.2" width="1.1" height="29.3" fill="#3060ff" opacity="0.25"/><rect x="675.1" y="92.9" width="0.9" height="22.4" fill="#0008a0" opacity="0.18"/><rect x="677.0" y="92.7" width="0.7" height="27.5" fill="#000c90" opacity="0.4"/><rect x="679.2" y="92.4" width="1.4" height="23.0" fill="#2848f8" opacity="0.25"/><rect x="682.6" y="92.0" width="1.4" height="18.2" fill="#3060ff" opacity="0.18"/><rect x="686.0" y="91.6" width="0.7" height="27.0" fill="#2848f8" opacity="0.25"/><rect x="688.6" y="91.2" width="1.1" height="24.3" fill="#4070ff" opacity="0.4"/><rect x="690.5" y="91.0" width="0.7" height="19.8" fill="#0008a0" opacity="0.32"/><rect x="693.9" y="90.6" width="0.7" height="18.9" fill="#2848f8" opacity="0.18"/><rect x="696.8" y="90.2" width="0.7" height="20.3" fill="#0008a0" opacity="0.32"/><rect x="698.7" y="90.0" width="0.9" height="25.0" fill="#4070ff" opacity="0.32"/><rect x="700.4" y="89.8" width="1.1" height="20.8" fill="#000c90" opacity="0.32"/><rect x="702.8" y="89.5" width="1.1" height="26.3" fill="#3060ff" opacity="0.4"/><rect x="706.1" y="89.1" width="0.9" height="20.6" fill="#0008a0" opacity="0.18"/><rect x="707.7" y="88.9" width="1.4" height="22.4" fill="#2848f8" opacity="0.4"/><rect x="710.9" y="88.5" width="0.7" height="28.9" fill="#2848f8" opacity="0.18"/><rect x="714.5" y="88.1" width="0.7" height="22.7" fill="#0008a0" opacity="0.4"/><rect x="717.9" y="87.7" width="0.7" height="20.1" fill="#000c90" opacity="0.32"/><rect x="721.0" y="87.4" width="1.4" height="25.8" fill="#2848f8" opacity="0.25"/><rect x="723.0" y="87.1" width="1.1" height="30.0" fill="#4070ff" opacity="0.32"/><rect x="726.4" y="86.7" width="1.1" height="20.9" fill="#0008a0" opacity="0.25"/><rect x="729.2" y="86.4" width="0.7" height="29.9" fill="#000c90" opacity="0.4"/><rect x="732.8" y="86.0" width="1.1" height="26.9" fill="#2848f8" opacity="0.18"/><rect x="736.1" y="85.6" width="0.9" height="24.2" fill="#2848f8" opacity="0.18"/><rect x="739.1" y="85.3" width="0.9" height="25.4" fill="#4070ff" opacity="0.4"/><rect x="742.0" y="84.9" width="0.9" height="21.0" fill="#4070ff" opacity="0.4"/><rect x="744.5" y="84.6" width="0.7" height="21.2" fill="#2848f8" opacity="0.4"/><rect x="747.7" y="84.3" width="0.9" height="22.0" fill="#0008a0" opacity="0.4"/><rect x="750.8" y="83.9" width="1.4" height="29.9" fill="#2848f8" opacity="0.4"/><rect x="752.5" y="83.7" width="1.4" height="27.3" fill="#000c90" opacity="0.32"/><rect x="754.4" y="83.4" width="0.7" height="20.7" fill="#3060ff" opacity="0.4"/><rect x="756.8" y="83.2" width="1.4" height="27.9" fill="#0008a0" opacity="0.4"/><rect x="759.1" y="82.9" width="0.7" height="24.8" fill="#000c90" opacity="0.4"/><rect x="762.4" y="82.5" width="1.4" height="27.0" fill="#0008a0" opacity="0.32"/><rect x="765.6" y="82.1" width="1.1" height="29.1" fill="#000c90" opacity="0.25"/><rect x="769.0" y="81.6" width="0.9" height="18.9" fill="#2848f8" opacity="0.32"/><rect x="770.9" y="81.4" width="1.1" height="28.0" fill="#3060ff" opacity="0.32"/><rect x="773.8" y="81.1" width="1.4" height="24.2" fill="#4070ff" opacity="0.25"/><rect x="775.8" y="80.8" width="1.1" height="26.2" fill="#000c90" opacity="0.32"/><rect x="777.4" y="80.6" width="1.1" height="28.1" fill="#3060ff" opacity="0.32"/><rect x="780.4" y="80.2" width="0.7" height="23.0" fill="#000c90" opacity="0.18"/><rect x="784.0" y="79.8" width="1.1" height="20.8" fill="#4070ff" opacity="0.4"/><rect x="786.5" y="79.5" width="1.1" height="18.3" fill="#2848f8" opacity="0.32"/><rect x="788.9" y="79.2" width="0.9" height="23.3" fill="#000c90" opacity="0.4"/><rect x="791.4" y="78.9" width="0.7" height="20.8" fill="#2848f8" opacity="0.4"/><rect x="793.7" y="78.6" width="1.1" height="19.9" fill="#0008a0" opacity="0.18"/><rect x="796.6" y="78.2" width="0.9" height="21.6" fill="#4070ff" opacity="0.18"/><rect x="798.6" y="78.0" width="0.9" height="18.1" fill="#2848f8" opacity="0.25"/><rect x="801.3" y="77.6" width="0.7" height="20.0" fill="#4070ff" opacity="0.18"/><rect x="804.5" y="77.0" width="0.7" height="20.4" fill="#000c90" opacity="0.25"/><rect x="806.2" y="76.7" width="0.9" height="20.9" fill="#2848f8" opacity="0.18"/><rect x="808.7" y="76.3" width="1.1" height="27.5" fill="#4070ff" opacity="0.18"/><rect x="812.2" y="75.7" width="0.7" height="27.7" fill="#4070ff" opacity="0.32"/><rect x="815.0" y="75.3" width="1.4" height="18.6" fill="#000c90" opacity="0.4"/><rect x="816.9" y="74.9" width="1.4" height="29.1" fill="#0008a0" opacity="0.18"/><rect x="820.0" y="74.4" width="1.1" height="24.4" fill="#0008a0" opacity="0.25"/><rect x="822.3" y="74.0" width="1.1" height="23.9" fill="#4070ff" opacity="0.32"/><rect x="824.0" y="73.7" width="1.1" height="21.4" fill="#4070ff" opacity="0.18"/><rect x="827.3" y="73.2" width="1.1" height="19.7" fill="#0008a0" opacity="0.25"/><rect x="829.6" y="72.8" width="0.7" height="21.2" fill="#2848f8" opacity="0.4"/><rect x="832.0" y="72.4" width="0.7" height="28.4" fill="#000c90" opacity="0.4"/><rect x="834.8" y="71.9" width="0.7" height="23.7" fill="#2848f8" opacity="0.32"/><rect x="837.4" y="71.4" width="0.9" height="21.7" fill="#4070ff" opacity="0.32"/><rect x="840.6" y="70.9" width="0.7" height="18.2" fill="#2848f8" opacity="0.25"/><rect x="842.6" y="70.4" width="0.9" height="20.0" fill="#3060ff" opacity="0.32"/><rect x="845.9" y="69.7" width="1.4" height="29.6" fill="#0008a0" opacity="0.25"/><rect x="847.9" y="69.2" width="1.4" height="26.4" fill="#0008a0" opacity="0.25"/><rect x="849.8" y="68.8" width="0.7" height="22.4" fill="#0008a0" opacity="0.25"/><rect x="853.1" y="68.0" width="1.4" height="21.0" fill="#0008a0" opacity="0.32"/><rect x="856.4" y="67.3" width="1.1" height="27.4" fill="#3060ff" opacity="0.4"/><rect x="859.8" y="66.5" width="0.7" height="20.5" fill="#3060ff" opacity="0.25"/><rect x="863.2" y="65.8" width="0.9" height="27.9" fill="#4070ff" opacity="0.25"/><rect x="866.7" y="65.0" width="1.1" height="25.9" fill="#4070ff" opacity="0.4"/><rect x="869.9" y="66.9" width="0.7" height="24.2" fill="#2848f8" opacity="0.18"/><rect x="873.0" y="69.7" width="0.7" height="20.0" fill="#4070ff" opacity="0.18"/><rect x="874.7" y="71.3" width="1.1" height="21.9" fill="#000c90" opacity="0.25"/><rect x="877.6" y="73.9" width="1.4" height="28.5" fill="#4070ff" opacity="0.32"/><rect x="881.1" y="77.1" width="0.7" height="24.6" fill="#0008a0" opacity="0.32"/><rect x="884.1" y="79.8" width="1.1" height="28.0" fill="#4070ff" opacity="0.32"/><rect x="887.5" y="82.8" width="1.1" height="21.2" fill="#2848f8" opacity="0.32"/><rect x="890.4" y="85.4" width="0.7" height="25.6" fill="#2848f8" opacity="0.25"/><path d="M598 143L600 157L604 158L607 152L610 151.3L615 150.4L618 147.6L623 150.7L626 144.2L631 146.7L634 142.8L636 147.4L641 145.7L644 145.9L646 145.6L648 140.2L650 141.8L653 144.3L655 143.2L659 142.4L662 142.7L665 143.1L669 140.6L671 142.1L673 139.9L677 139.2L679 140.6L683 137.3L686 138.3L690 132.6L692 137.3L694 136.1L696 134.9L701 130.6L703 136.3L705 131.8L708 129.4L713 132.7L718 131.8L720 132.2L723 132.6L727 129.3L729 129.0L733 124.8L738 123.9L741 125.3L743 123.0L745 126.9L750 123.7L753 125.4L756 126.7L759 124.3L764 119.2L769 122.5L772 117.8L776 122.1L780 116.3L783 117.7L788 119.9L790 114.5L793 115.9L798 116.5L800 117.7L804 115.4L809 111.1L811 110.7L814 115.2L817 109.6L821 112.3L826 109.9L831 112.1L834 110.8L837 112.0L840 108.9L843 109.9L846 110.4L849 105.7L852 109.3L857 106.6L859 106.2L861 101.7L863 101.3L867 102.5L872 102" stroke="#40d0f0" stroke-width=".7" fill="none" opacity=".8"/><rect x="620.0" y="212.5" width="0.6" height="19.0" fill="#70ff50" opacity="0.35"/><rect x="622.8" y="215.7" width="0.6" height="17.7" fill="#70ff50" opacity="0.25"/><rect x="624.8" y="213.8" width="1" height="17.6" fill="#58ff38" opacity="0.25"/><rect x="627.5" y="213.7" width="0.8" height="16.5" fill="#58ff38" opacity="0.25"/><rect x="629.4" y="217.4" width="0.6" height="11.0" fill="#70ff50" opacity="0.35"/><rect x="631.3" y="219.5" width="1" height="11.2" fill="#70ff50" opacity="0.25"/><rect x="634.4" y="212.0" width="0.6" height="20.9" fill="#0a8a0a" opacity="0.45"/><rect x="637.1" y="212.5" width="0.6" height="14.1" fill="#0c940c" opacity="0.35"/><rect x="640.1" y="216.3" width="1" height="15.8" fill="#70ff50" opacity="0.25"/><rect x="643.0" y="209.5" width="1" height="18.1" fill="#0a8a0a" opacity="0.35"/><rect x="645.5" y="209.9" width="1" height="16.8" fill="#70ff50" opacity="0.35"/><rect x="647.7" y="211.9" width="1" height="21.8" fill="#0c940c" opacity="0.35"/><rect x="649.5" y="213.1" width="0.6" height="15.9" fill="#58ff38" opacity="0.25"/><rect x="652.6" y="217.3" width="1" height="10.0" fill="#58ff38" opacity="0.45"/><rect x="654.5" y="213.2" width="1" height="12.9" fill="#58ff38" opacity="0.25"/><rect x="656.8" y="209.6" width="0.8" height="20.8" fill="#0c940c" opacity="0.25"/><rect x="659.1" y="209.6" width="0.8" height="15.2" fill="#0c940c" opacity="0.45"/><rect x="661.8" y="208.4" width="1" height="17.6" fill="#0c940c" opacity="0.45"/><rect x="664.0" y="214.7" width="1" height="11.2" fill="#0a8a0a" opacity="0.35"/><rect x="665.7" y="212.7" width="1" height="15.6" fill="#70ff50" opacity="0.25"/><rect x="667.5" y="207.5" width="0.6" height="19.7" fill="#58ff38" opacity="0.45"/><rect x="669.8" y="213.1" width="0.8" height="9.2" fill="#70ff50" opacity="0.45"/><rect x="672.2" y="215.2" width="1" height="8.9" fill="#70ff50" opacity="0.25"/><rect x="675.0" y="210.5" width="1" height="15.1" fill="#0a8a0a" opacity="0.45"/><rect x="677.1" y="210.0" width="0.8" height="13.9" fill="#0c940c" opacity="0.45"/><rect x="679.6" y="208.3" width="0.8" height="10.5" fill="#58ff38" opacity="0.45"/><rect x="681.8" y="205.8" width="0.8" height="20.5" fill="#0c940c" opacity="0.35"/><rect x="683.7" y="204.1" width="0.8" height="18.3" fill="#58ff38" opacity="0.45"/><rect x="685.8" y="207.7" width="1" height="12.8" fill="#58ff38" opacity="0.25"/><rect x="687.5" y="206.1" width="1" height="20.5" fill="#58ff38" opacity="0.25"/><rect x="690.3" y="209.8" width="1" height="11.2" fill="#58ff38" opacity="0.25"/><rect x="692.7" y="203.6" width="1" height="20.9" fill="#70ff50" opacity="0.25"/><rect x="694.9" y="203.6" width="0.8" height="20.0" fill="#0c940c" opacity="0.25"/><rect x="697.8" y="202.6" width="0.6" height="14.5" fill="#0a8a0a" opacity="0.25"/><rect x="700.9" y="206.2" width="0.8" height="13.3" fill="#0c940c" opacity="0.25"/><rect x="702.9" y="201.3" width="0.6" height="17.4" fill="#0a8a0a" opacity="0.45"/><rect x="704.5" y="202.8" width="1" height="12.7" fill="#58ff38" opacity="0.35"/><rect x="706.6" y="200.7" width="0.6" height="18.2" fill="#0c940c" opacity="0.45"/><rect x="709.4" y="200.0" width="0.8" height="21.7" fill="#0a8a0a" opacity="0.35"/><rect x="711.7" y="207.8" width="0.8" height="9.2" fill="#0c940c" opacity="0.35"/><rect x="714.3" y="201.8" width="0.8" height="19.4" fill="#70ff50" opacity="0.45"/><rect x="716.1" y="200.9" width="0.6" height="20.7" fill="#58ff38" opacity="0.45"/><rect x="718.4" y="205.1" width="1" height="11.8" fill="#0a8a0a" opacity="0.35"/><rect x="721.2" y="201.2" width="0.8" height="13.3" fill="#58ff38" opacity="0.25"/><rect x="724.1" y="204.3" width="0.6" height="12.0" fill="#0c940c" opacity="0.45"/><rect x="727.2" y="201.9" width="0.8" height="9.3" fill="#70ff50" opacity="0.45"/><rect x="730.3" y="201.8" width="0.8" height="14.6" fill="#58ff38" opacity="0.35"/><rect x="732.1" y="202.9" width="1" height="11.6" fill="#0a8a0a" opacity="0.25"/><rect x="734.9" y="201.3" width="0.8" height="9.1" fill="#0c940c" opacity="0.35"/><rect x="736.5" y="201.2" width="1" height="15.2" fill="#0c940c" opacity="0.25"/><rect x="739.6" y="197.9" width="0.8" height="14.9" fill="#0a8a0a" opacity="0.25"/><rect x="742.5" y="202.2" width="0.8" height="8.3" fill="#70ff50" opacity="0.25"/><rect x="745.0" y="198.2" width="0.8" height="16.4" fill="#70ff50" opacity="0.45"/><rect x="746.9" y="200.5" width="1" height="9.3" fill="#70ff50" opacity="0.35"/><rect x="749.6" y="196.8" width="0.8" height="19.9" fill="#0c940c" opacity="0.35"/><rect x="751.1" y="194.6" width="0.6" height="21.8" fill="#70ff50" opacity="0.35"/><rect x="753.5" y="201.6" width="0.8" height="9.8" fill="#0c940c" opacity="0.45"/><rect x="756.6" y="197.4" width="1" height="14.5" fill="#58ff38" opacity="0.25"/><rect x="759.2" y="195.8" width="0.6" height="11.7" fill="#70ff50" opacity="0.25"/><rect x="762.4" y="192.4" width="0.8" height="20.5" fill="#0a8a0a" opacity="0.35"/><rect x="764.9" y="193.4" width="0.8" height="11.2" fill="#58ff38" opacity="0.25"/><rect x="767.5" y="193.7" width="0.8" height="18.9" fill="#0c940c" opacity="0.35"/><rect x="769.8" y="188.1" width="0.6" height="20.8" fill="#58ff38" opacity="0.45"/><rect x="772.1" y="191.3" width="1" height="12.7" fill="#0c940c" opacity="0.35"/><rect x="773.8" y="192.6" width="0.6" height="15.4" fill="#70ff50" opacity="0.35"/><rect x="775.6" y="188.1" width="0.8" height="19.6" fill="#0a8a0a" opacity="0.45"/><rect x="778.6" y="189.4" width="0.8" height="16.9" fill="#0c940c" opacity="0.35"/><rect x="780.1" y="195.3" width="1" height="10.0" fill="#0c940c" opacity="0.35"/><rect x="783.2" y="192.1" width="0.8" height="12.2" fill="#0a8a0a" opacity="0.25"/><rect x="786.2" y="195.9" width="1" height="8.5" fill="#58ff38" opacity="0.25"/><rect x="788.6" y="186.5" width="0.8" height="19.7" fill="#58ff38" opacity="0.45"/><rect x="790.3" y="194.3" width="0.8" height="8.1" fill="#70ff50" opacity="0.45"/><rect x="791.9" y="188.5" width="1" height="17.4" fill="#0a8a0a" opacity="0.45"/><rect x="794.1" y="186.7" width="0.8" height="17.6" fill="#70ff50" opacity="0.45"/><rect x="796.4" y="189.0" width="0.8" height="21.2" fill="#58ff38" opacity="0.35"/><rect x="798.6" y="193.9" width="0.8" height="9.7" fill="#0a8a0a" opacity="0.35"/><rect x="800.8" y="184.8" width="1" height="17.4" fill="#0c940c" opacity="0.35"/><rect x="803.3" y="191.5" width="1" height="14.2" fill="#58ff38" opacity="0.35"/><rect x="806.2" y="190.6" width="1" height="11.1" fill="#0a8a0a" opacity="0.25"/><rect x="808.7" y="182.3" width="0.8" height="20.0" fill="#70ff50" opacity="0.25"/><rect x="811.7" y="186.3" width="0.8" height="19.3" fill="#0c940c" opacity="0.35"/><rect x="814.9" y="188.5" width="1" height="9.1" fill="#0a8a0a" opacity="0.45"/><rect x="816.4" y="186.1" width="1" height="12.5" fill="#58ff38" opacity="0.45"/><rect x="818.9" y="189.5" width="0.8" height="10.4" fill="#58ff38" opacity="0.35"/><rect x="820.5" y="181.6" width="0.6" height="18.7" fill="#70ff50" opacity="0.45"/><rect x="822.3" y="186.3" width="0.6" height="17.7" fill="#0c940c" opacity="0.25"/><rect x="824.8" y="184.8" width="0.8" height="9.1" fill="#0c940c" opacity="0.25"/><rect x="827.3" y="188.0" width="0.6" height="9.9" fill="#0a8a0a" opacity="0.45"/><rect x="830.1" y="184.4" width="0.6" height="19.9" fill="#58ff38" opacity="0.45"/><rect x="832.9" y="185.5" width="0.8" height="12.3" fill="#70ff50" opacity="0.45"/><rect x="834.7" y="183.5" width="1" height="13.0" fill="#58ff38" opacity="0.45"/><rect x="837.0" y="186.0" width="0.6" height="13.9" fill="#0c940c" opacity="0.25"/><rect x="840.2" y="187.3" width="0.6" height="9.8" fill="#0c940c" opacity="0.45"/><rect x="842.1" y="180.6" width="1" height="18.1" fill="#70ff50" opacity="0.35"/><rect x="845.1" y="182.7" width="0.8" height="12.4" fill="#70ff50" opacity="0.35"/><rect x="846.5" y="176.9" width="1" height="21.9" fill="#70ff50" opacity="0.35"/><rect x="849.1" y="182.2" width="0.8" height="10.0" fill="#0c940c" opacity="0.25"/><rect x="850.7" y="179.8" width="0.6" height="12.9" fill="#0a8a0a" opacity="0.45"/><rect x="852.9" y="181.1" width="0.8" height="17.0" fill="#70ff50" opacity="0.45"/><rect x="855.1" y="177.3" width="0.8" height="15.9" fill="#70ff50" opacity="0.35"/><rect x="856.7" y="178.5" width="0.8" height="19.1" fill="#0a8a0a" opacity="0.25"/><rect x="858.5" y="181.9" width="0.8" height="15.0" fill="#0c940c" opacity="0.25"/><rect x="860.0" y="180.1" width="1" height="12.3" fill="#0c940c" opacity="0.25"/><rect x="862.2" y="176.3" width="0.6" height="17.2" fill="#58ff38" opacity="0.45"/><rect x="864.3" y="178.9" width="0.6" height="13.4" fill="#0a8a0a" opacity="0.25"/><rect x="867.4" y="177.5" width="1" height="14.2" fill="#70ff50" opacity="0.35"/><rect x="870.5" y="174.1" width="0.6" height="19.3" fill="#58ff38" opacity="0.25"/><rect x="872.3" y="173.7" width="1" height="17.0" fill="#70ff50" opacity="0.25"/><rect x="875.4" y="175.0" width="1" height="12.7" fill="#70ff50" opacity="0.35"/><rect x="878.3" y="176.6" width="0.8" height="15.4" fill="#0a8a0a" opacity="0.25"/><rect x="881.1" y="174.6" width="0.6" height="16.5" fill="#0c940c" opacity="0.35"/><rect x="883.3" y="174.5" width="0.6" height="21.9" fill="#0c940c" opacity="0.45"/><text x="585.500" y="89.400" font-family="Liberation Serif,Noto Serif CJK SC,serif" font-size="28.200" fill="#ff0000" textLength="27" lengthAdjust="spacingAndGlyphs">NG</text></svg>
<span class="f" style="top:346.10px;font-size:4.5px;line-height:5.40px;color:#222;left:507px;transform-origin:0 50%;transform:scaleX(0.95);">3D测量数据</span>
<div style="left:506.3px;top:353.3px;width:15.6px;height:8.3px;background:#fafafa;"></div>
<span class="f" style="top:354.64px;font-size:4.6px;line-height:5.52px;color:#111;left:508.2px;">数据</span>
<span class="f" style="top:354.96px;font-size:4.4px;line-height:5.28px;color:#222;left:526.6px;transform-origin:0 50%;transform:scaleX(0.95);">CPK曲线</span>
<div style="left:506.6px;top:361.6px;width:488.4px;height:24.6px;background:#f7f7f7;border:1px solid #e6e6e6;"></div>
<div style="left:507.5px;top:362.4px;width:486px;height:18.9px;background:#ffffff;border:1px solid #5a5a5a;border-radius:1px;"></div>
<div style="left:508.3px;top:370.5px;width:477.7px;height:0.5px;background:#bdbdbd;"></div>
<div style="left:527.4px;top:363.2px;width:0.45px;height:17.2px;background:#c9c9c9;"></div>
<div style="left:562px;top:363.2px;width:0.45px;height:17.2px;background:#c9c9c9;"></div>
<div style="left:608.2px;top:363.2px;width:0.45px;height:17.2px;background:#c9c9c9;"></div>
<div style="left:631.2px;top:363.2px;width:0.45px;height:17.2px;background:#c9c9c9;"></div>
<div style="left:665.8px;top:363.2px;width:0.45px;height:17.2px;background:#c9c9c9;"></div>
<div style="left:700.4px;top:363.2px;width:0.45px;height:17.2px;background:#c9c9c9;"></div>
<div style="left:735px;top:363.2px;width:0.45px;height:17.2px;background:#c9c9c9;"></div>
<div style="left:769.5px;top:363.2px;width:0.45px;height:17.2px;background:#c9c9c9;"></div>
<div style="left:804px;top:363.2px;width:0.45px;height:17.2px;background:#c9c9c9;"></div>
<div style="left:838.5px;top:363.2px;width:0.45px;height:17.2px;background:#c9c9c9;"></div>
<div style="left:873px;top:363.2px;width:0.45px;height:17.2px;background:#c9c9c9;"></div>
<div style="left:907.5px;top:363.2px;width:0.45px;height:17.2px;background:#c9c9c9;"></div>
<div style="left:942px;top:363.2px;width:0.45px;height:17.2px;background:#c9c9c9;"></div>
<div style="left:976.5px;top:363.2px;width:0.45px;height:17.2px;background:#c9c9c9;"></div>
<div style="left:508.3px;top:363.2px;width:19.1px;height:17.1px;background:#fdfdfd;"></div>
<div style="left:527.8px;top:371.1px;width:34.2px;height:8.8px;background:#0078d7;"></div>
<svg style="left:510.600px;top:373.700px" width="2" height="3" viewBox="0 0 2 3"><path d="M0 0l2 1.500-2 1.500z" fill="#222"/></svg>
<span class="f" style="top:364.16px;font-size:4.4px;line-height:5.28px;color:#222;left:544.7px;transform:translateX(-50%);">时间</span>
<span class="f" style="top:364.16px;font-size:4.4px;line-height:5.28px;color:#222;left:585px;transform:translateX(-50%);">产品ID</span>
<span class="f" style="top:364.16px;font-size:4.4px;line-height:5.28px;color:#222;left:619.7px;transform:translateX(-50%);">胶阀</span>
<span class="f" style="top:364.16px;font-size:4.4px;line-height:5.28px;color:#222;left:648.5px;transform:translateX(-50%);">结果</span>
<span class="f" style="top:364.16px;font-size:4.4px;line-height:5.28px;color:#222;left:683px;transform:translateX(-50%);">平整度</span>
<span class="f" style="top:364.16px;font-size:4.4px;line-height:5.28px;color:#222;left:717.7px;transform:translateX(-50%);">1</span>
<span class="f" style="top:364.16px;font-size:4.4px;line-height:5.28px;color:#222;left:752.2px;transform:translateX(-50%);">2</span>
<span class="f" style="top:364.16px;font-size:4.4px;line-height:5.28px;color:#222;left:786.7px;transform:translateX(-50%);">3</span>
<span class="f" style="top:364.16px;font-size:4.4px;line-height:5.28px;color:#222;left:821.2px;transform:translateX(-50%);">4</span>
<span class="f" style="top:364.16px;font-size:4.4px;line-height:5.28px;color:#222;left:855.7px;transform:translateX(-50%);">5</span>
<span class="f" style="top:364.16px;font-size:4.4px;line-height:5.28px;color:#222;left:890.2px;transform:translateX(-50%);">6</span>
<span class="f" style="top:364.16px;font-size:4.4px;line-height:5.28px;color:#222;left:924.7px;transform:translateX(-50%);">7</span>
<span class="f" style="top:364.16px;font-size:4.4px;line-height:5.28px;color:#222;left:959.2px;transform:translateX(-50%);">8</span>
<span class="r" style="top:372.72px;font-size:4.8px;line-height:5.76px;color:#fff;left:529px;transform-origin:0 50%;transform:scaleX(1.1);">18:16:11</span>
<span class="r" style="top:372.78px;font-size:4.7px;line-height:5.64px;color:#222;left:562.8px;">20210930_181611_345</span>
<span class="r" style="top:372.96px;font-size:4.4px;line-height:5.28px;color:#222;left:609px;">PF0</span>
<span class="r" style="top:372.96px;font-size:4.4px;line-height:5.28px;color:#ff0000;left:632px;">NG</span>
<span class="r" style="top:372.96px;font-size:4.4px;line-height:5.28px;color:#008000;left:666.6px;">OK</span>
<span class="r" style="top:372.72px;font-size:4.8px;line-height:5.76px;color:#008000;left:701.4px;">79.000</span>
<span class="r" style="top:372.72px;font-size:4.8px;line-height:5.76px;color:#008000;left:736px;">79.000</span>
<span class="r" style="top:372.72px;font-size:4.8px;line-height:5.76px;color:#008000;left:770.5px;">88.000</span>
<span class="r" style="top:372.72px;font-size:4.8px;line-height:5.76px;color:#008000;left:805px;">86.000</span>
<span class="r" style="top:372.72px;font-size:4.8px;line-height:5.76px;color:#008000;left:839.5px;">87.000</span>
<span class="r" style="top:372.72px;font-size:4.8px;line-height:5.76px;color:#008000;left:874px;">80.000</span>
<span class="r" style="top:372.72px;font-size:4.8px;line-height:5.76px;color:#008000;left:908.5px;">93.000</span>
<span class="r" style="top:372.72px;font-size:4.8px;line-height:5.76px;color:#ff0000;left:943px;">54.000</span>
<span class="r" style="top:372.72px;font-size:4.8px;line-height:5.76px;color:#008000;left:977.6px;">103.</span>
<div style="left:986px;top:363.2px;width:6.7px;height:17.1px;background:#f0f0f0;"></div>
<svg style="left:987.300px;top:364.400px" width="4" height="15" viewBox="0 0 4 15"><path d="M.5 3l1.500-1.600L3.500 3M.5 12l1.500 1.600L3.500 12" fill="none" stroke="#444" stroke-width=".6"/></svg>
<div style="left:506.3px;top:387.6px;width:31.6px;height:8.4px;background:#fbfbfb;"></div>
<span class="f" style="top:389.04px;font-size:4.6px;line-height:5.52px;color:#111;left:507.8px;">高度截面数据</span>
<div style="left:537.9px;top:388.6px;width:23.5px;height:7.4px;background:#f3f3f3;border:0.4px solid #e2e2e2;border-bottom:none;"></div>
<span class="f" style="top:389.44px;font-size:4.6px;line-height:5.52px;color:#222;left:540.3px;">日志显示</span>
<div style="left:506.6px;top:396px;width:391.4px;height:136.4px;background:#f7f7f7;border:0.5px solid #dcdcdc;"></div>
<svg style="left:507.6px;top:397.6px" width="388.4" height="133.2" viewBox="507.6 397.6 388.4 133.2"><rect x="507.6" y="397.6" width="388.4" height="133.2" fill="#a9a9a9"/><rect x="539.900" y="404" width="344.600" height="113" fill="#fff"/><path d="M539.900 404H884.500" stroke="#444" stroke-width=".6" stroke-dasharray=".6 .5"/><path d="M537.600 404h2.300" stroke="#333" stroke-width=".4"/><text x="536.600" y="405.3" font-family="Liberation Sans,Noto Sans CJK SC,sans-serif" font-size="4.200" fill="#222" text-anchor="end">500</text><path d="M539.900 422.9H884.500" stroke="#444" stroke-width=".6" stroke-dasharray=".6 .5"/><path d="M537.600 422.9h2.300" stroke="#333" stroke-width=".4"/><text x="536.600" y="424.2" font-family="Liberation Sans,Noto Sans CJK SC,sans-serif" font-size="4.200" fill="#222" text-anchor="end">400</text><path d="M539.900 441.7H884.500" stroke="#444" stroke-width=".6" stroke-dasharray=".6 .5"/><path d="M537.600 441.7h2.300" stroke="#333" stroke-width=".4"/><text x="536.600" y="443.0" font-family="Liberation Sans,Noto Sans CJK SC,sans-serif" font-size="4.200" fill="#222" text-anchor="end">300</text><path d="M539.900 460.5H884.500" stroke="#444" stroke-width=".6" stroke-dasharray=".6 .5"/><path d="M537.600 460.5h2.300" stroke="#333" stroke-width=".4"/><text x="536.600" y="461.8" font-family="Liberation Sans,Noto Sans CJK SC,sans-serif" font-size="4.200" fill="#222" text-anchor="end">200</text><path d="M539.900 479.4H884.500" stroke="#444" stroke-width=".6" stroke-dasharray=".6 .5"/><path d="M537.600 479.4h2.300" stroke="#333" stroke-width=".4"/><text x="536.600" y="480.7" font-family="Liberation Sans,Noto Sans CJK SC,sans-serif" font-size="4.200" fill="#222" text-anchor="end">100</text><path d="M539.900 498.2H884.500" stroke="#444" stroke-width=".6" stroke-dasharray=".6 .5"/><path d="M537.600 498.2h2.300" stroke="#333" stroke-width=".4"/><text x="536.600" y="499.5" font-family="Liberation Sans,Noto Sans CJK SC,sans-serif" font-size="4.200" fill="#222" text-anchor="end">0</text><path d="M539.900 517H884.500" stroke="#444" stroke-width=".6" stroke-dasharray=".6 .5"/><path d="M537.600 517h2.300" stroke="#333" stroke-width=".4"/><text x="536.600" y="518.3" font-family="Liberation Sans,Noto Sans CJK SC,sans-serif" font-size="4.200" fill="#222" text-anchor="end">-100</text><text x="540" y="523.300" font-family="Liberation Sans,Noto Sans CJK SC,sans-serif" font-size="4.200" fill="#222" text-anchor="middle">0</text><path d="M629.3 404V517" stroke="#444" stroke-width=".55" stroke-dasharray=".5 .4"/><text x="629.3" y="523.300" font-family="Liberation Sans,Noto Sans CJK SC,sans-serif" font-size="4.200" fill="#222" text-anchor="middle">50</text><path d="M718.6 404V517" stroke="#444" stroke-width=".55" stroke-dasharray=".5 .4"/><text x="718.6" y="523.300" font-family="Liberation Sans,Noto Sans CJK SC,sans-serif" font-size="4.200" fill="#222" text-anchor="middle">100</text><path d="M807.6 404V517" stroke="#444" stroke-width=".55" stroke-dasharray=".5 .4"/><text x="807.6" y="523.300" font-family="Liberation Sans,Noto Sans CJK SC,sans-serif" font-size="4.200" fill="#222" text-anchor="middle">150</text><path d="M539.900 404V517H884.500" stroke="#555" stroke-width=".5" fill="none"/><path d="M540.0 479.4L631.1 479.4L632.2 451.1L635.0 450.2L637.5 441.7L647.2 439.8L665.0 437.0L682.9 435.8L727.5 435.8L745.4 434.5L763.2 431.9L781.1 428.1L793.6 424.3L800.8 422.1L804.0 421.9L805.4 498.2L807.5 419.4L825.8 418.7L852.5 417.9L874.0 417.0L876.5 417.6L878.3 498.2L883.6 498.2" stroke="#5f9f58" stroke-width=".7" fill="none" stroke-linejoin="round"/></svg>
<div style="left:903.2px;top:389.4px;width:90px;height:141.8px;background:#ff0000;"></div>
<span class="f" style="top:448.50px;font-size:20.5px;line-height:24.60px;font-weight:bold;left:947.7px;transform:translateX(-50%);">NG</span>
<span class="f" style="top:506.94px;font-size:5.6px;line-height:6.72px;color:#f3a0a0;left:898.6px;">激活 Windows</span>
<span class="f" style="top:514.46px;font-size:3.9px;line-height:4.68px;color:#f39a9a;left:898.6px;">转到&quot;设置&quot;以激活 Windows。</span>
<div style="left:505.6px;top:537.8px;width:43.799999999999955px;height:8px;border:1px solid #d4d4d4;border-right-color:#fcfcfc;border-bottom-color:#fcfcfc;"></div>
<span class="f" style="top:538.14px;font-size:7.1px;line-height:8.52px;color:#111;font-weight:bold;left:507.2px;transform-origin:0 50%;transform:scaleX(0.9);">扫描时间(ms):</span>
<div style="left:550.6px;top:537.8px;width:14.399999999999977px;height:8px;border:1px solid #d4d4d4;border-right-color:#fcfcfc;border-bottom-color:#fcfcfc;"></div>
<span class="f" style="top:538.14px;font-size:7.1px;line-height:8.52px;color:#111;font-weight:bold;left:557.8px;transform:translateX(-50%);">379</span>
<div style="left:566.2px;top:537.8px;width:19.399999999999977px;height:8px;border:1px solid #d4d4d4;border-right-color:#fcfcfc;border-bottom-color:#fcfcfc;"></div>
<span class="f" style="top:538.14px;font-size:7.1px;line-height:8.52px;color:#111;font-weight:bold;left:568.4px;transform-origin:0 50%;transform:scaleX(0.9);">总数:</span>
<div style="left:586.8px;top:537.8px;width:23.800000000000068px;height:8px;border:1px solid #d4d4d4;border-right-color:#fcfcfc;border-bottom-color:#fcfcfc;"></div>
<span class="f" style="top:538.14px;font-size:7.1px;line-height:8.52px;color:#111;font-weight:bold;left:598.7px;transform:translateX(-50%);">49085</span>
<div style="left:611.8px;top:537.8px;width:21.40000000000009px;height:8px;border:1px solid #d4d4d4;border-right-color:#fcfcfc;border-bottom-color:#fcfcfc;"></div>
<span class="f" style="top:538.14px;font-size:7.1px;line-height:8.52px;color:#111;font-weight:bold;left:613.6px;transform-origin:0 50%;transform:scaleX(0.9);">OK数:</span>
<div style="left:634.4px;top:537.8px;width:24.0px;height:8px;border:1px solid #d4d4d4;border-right-color:#fcfcfc;border-bottom-color:#fcfcfc;"></div>
<span class="f" style="top:538.14px;font-size:7.1px;line-height:8.52px;color:#111;font-weight:bold;left:646.5px;transform:translateX(-50%);">45617</span>
<div style="left:659.6px;top:537.8px;width:22.0px;height:8px;border:1px solid #d4d4d4;border-right-color:#fcfcfc;border-bottom-color:#fcfcfc;"></div>
<span class="f" style="top:538.14px;font-size:7.1px;line-height:8.52px;color:#111;font-weight:bold;left:661px;transform-origin:0 50%;transform:scaleX(0.9);">NG数:</span>
<div style="left:682.8px;top:537.8px;width:19.200000000000045px;height:8px;border:1px solid #d4d4d4;border-right-color:#fcfcfc;border-bottom-color:#fcfcfc;"></div>
<span class="f" style="top:538.14px;font-size:7.1px;line-height:8.52px;color:#111;font-weight:bold;left:692.3px;transform:translateX(-50%);">3468</span>
<div style="left:703.2px;top:537.8px;width:18.799999999999955px;height:8px;border:1px solid #d4d4d4;border-right-color:#fcfcfc;border-bottom-color:#fcfcfc;"></div>
<span class="f" style="top:538.14px;font-size:7.1px;line-height:8.52px;color:#111;font-weight:bold;left:705px;transform-origin:0 50%;transform:scaleX(0.9);">良率:</span>
<div style="left:723.2px;top:537.8px;width:31.799999999999955px;height:8px;border:1px solid #d4d4d4;border-right-color:#fcfcfc;border-bottom-color:#fcfcfc;"></div>
<span class="f" style="top:538.14px;font-size:7.1px;line-height:8.52px;color:#111;font-weight:bold;left:739px;transform:translateX(-50%);">92.935%</span>
<div style="left:503.2px;top:545.7px;width:494.6px;height:3px;background:#1d2a3a;"></div>
<span class="f" style="top:546.44px;font-size:4.6px;line-height:5.52px;color:#fff;left:960px;">18:17</span>
<svg style="left:0;top:0;pointer-events:none" width="1000" height="552" viewBox="0 0 1000 552" fill="#8b8b8b" fill-opacity=".215"><path d="M188 233C160 234 118 252 103 286C128 268 170 268 188 233z"/><path d="M222 283C180 282 112 300 88 343C125 318 190 322 222 283z"/><path d="M214 332C172 331 106 346 80 394C118 366 184 370 214 332z"/><text x="236" y="377" font-family="Liberation Sans,sans-serif" font-weight="bold" font-size="160" textLength="86" lengthAdjust="spacingAndGlyphs">C</text><text x="331" y="377" font-family="Liberation Sans,sans-serif" font-weight="bold" font-size="160" textLength="22" lengthAdjust="spacingAndGlyphs">I</text><text x="360" y="377" font-family="Liberation Sans,sans-serif" font-weight="bold" font-size="160" textLength="100" lengthAdjust="spacingAndGlyphs">S</text><text x="480" y="377" font-family="Liberation Sans,sans-serif" font-weight="bold" font-size="160" textLength="105" lengthAdjust="spacingAndGlyphs">R</text><text x="603" y="377" font-family="Liberation Sans,sans-serif" font-weight="bold" font-size="160" textLength="125" lengthAdjust="spacingAndGlyphs">A</text><text x="705" y="377" font-family="Liberation Sans,sans-serif" font-weight="bold" font-size="160" textLength="125" lengthAdjust="spacingAndGlyphs">Y</text><circle cx="890" cy="262.500" r="37" fill="none" stroke="#8b8b8b" stroke-opacity=".215" stroke-width="6"/><text x="890" y="283" font-family="Liberation Serif,serif" font-weight="bold" font-size="62" text-anchor="middle">R</text></svg>
</div></body></html>
